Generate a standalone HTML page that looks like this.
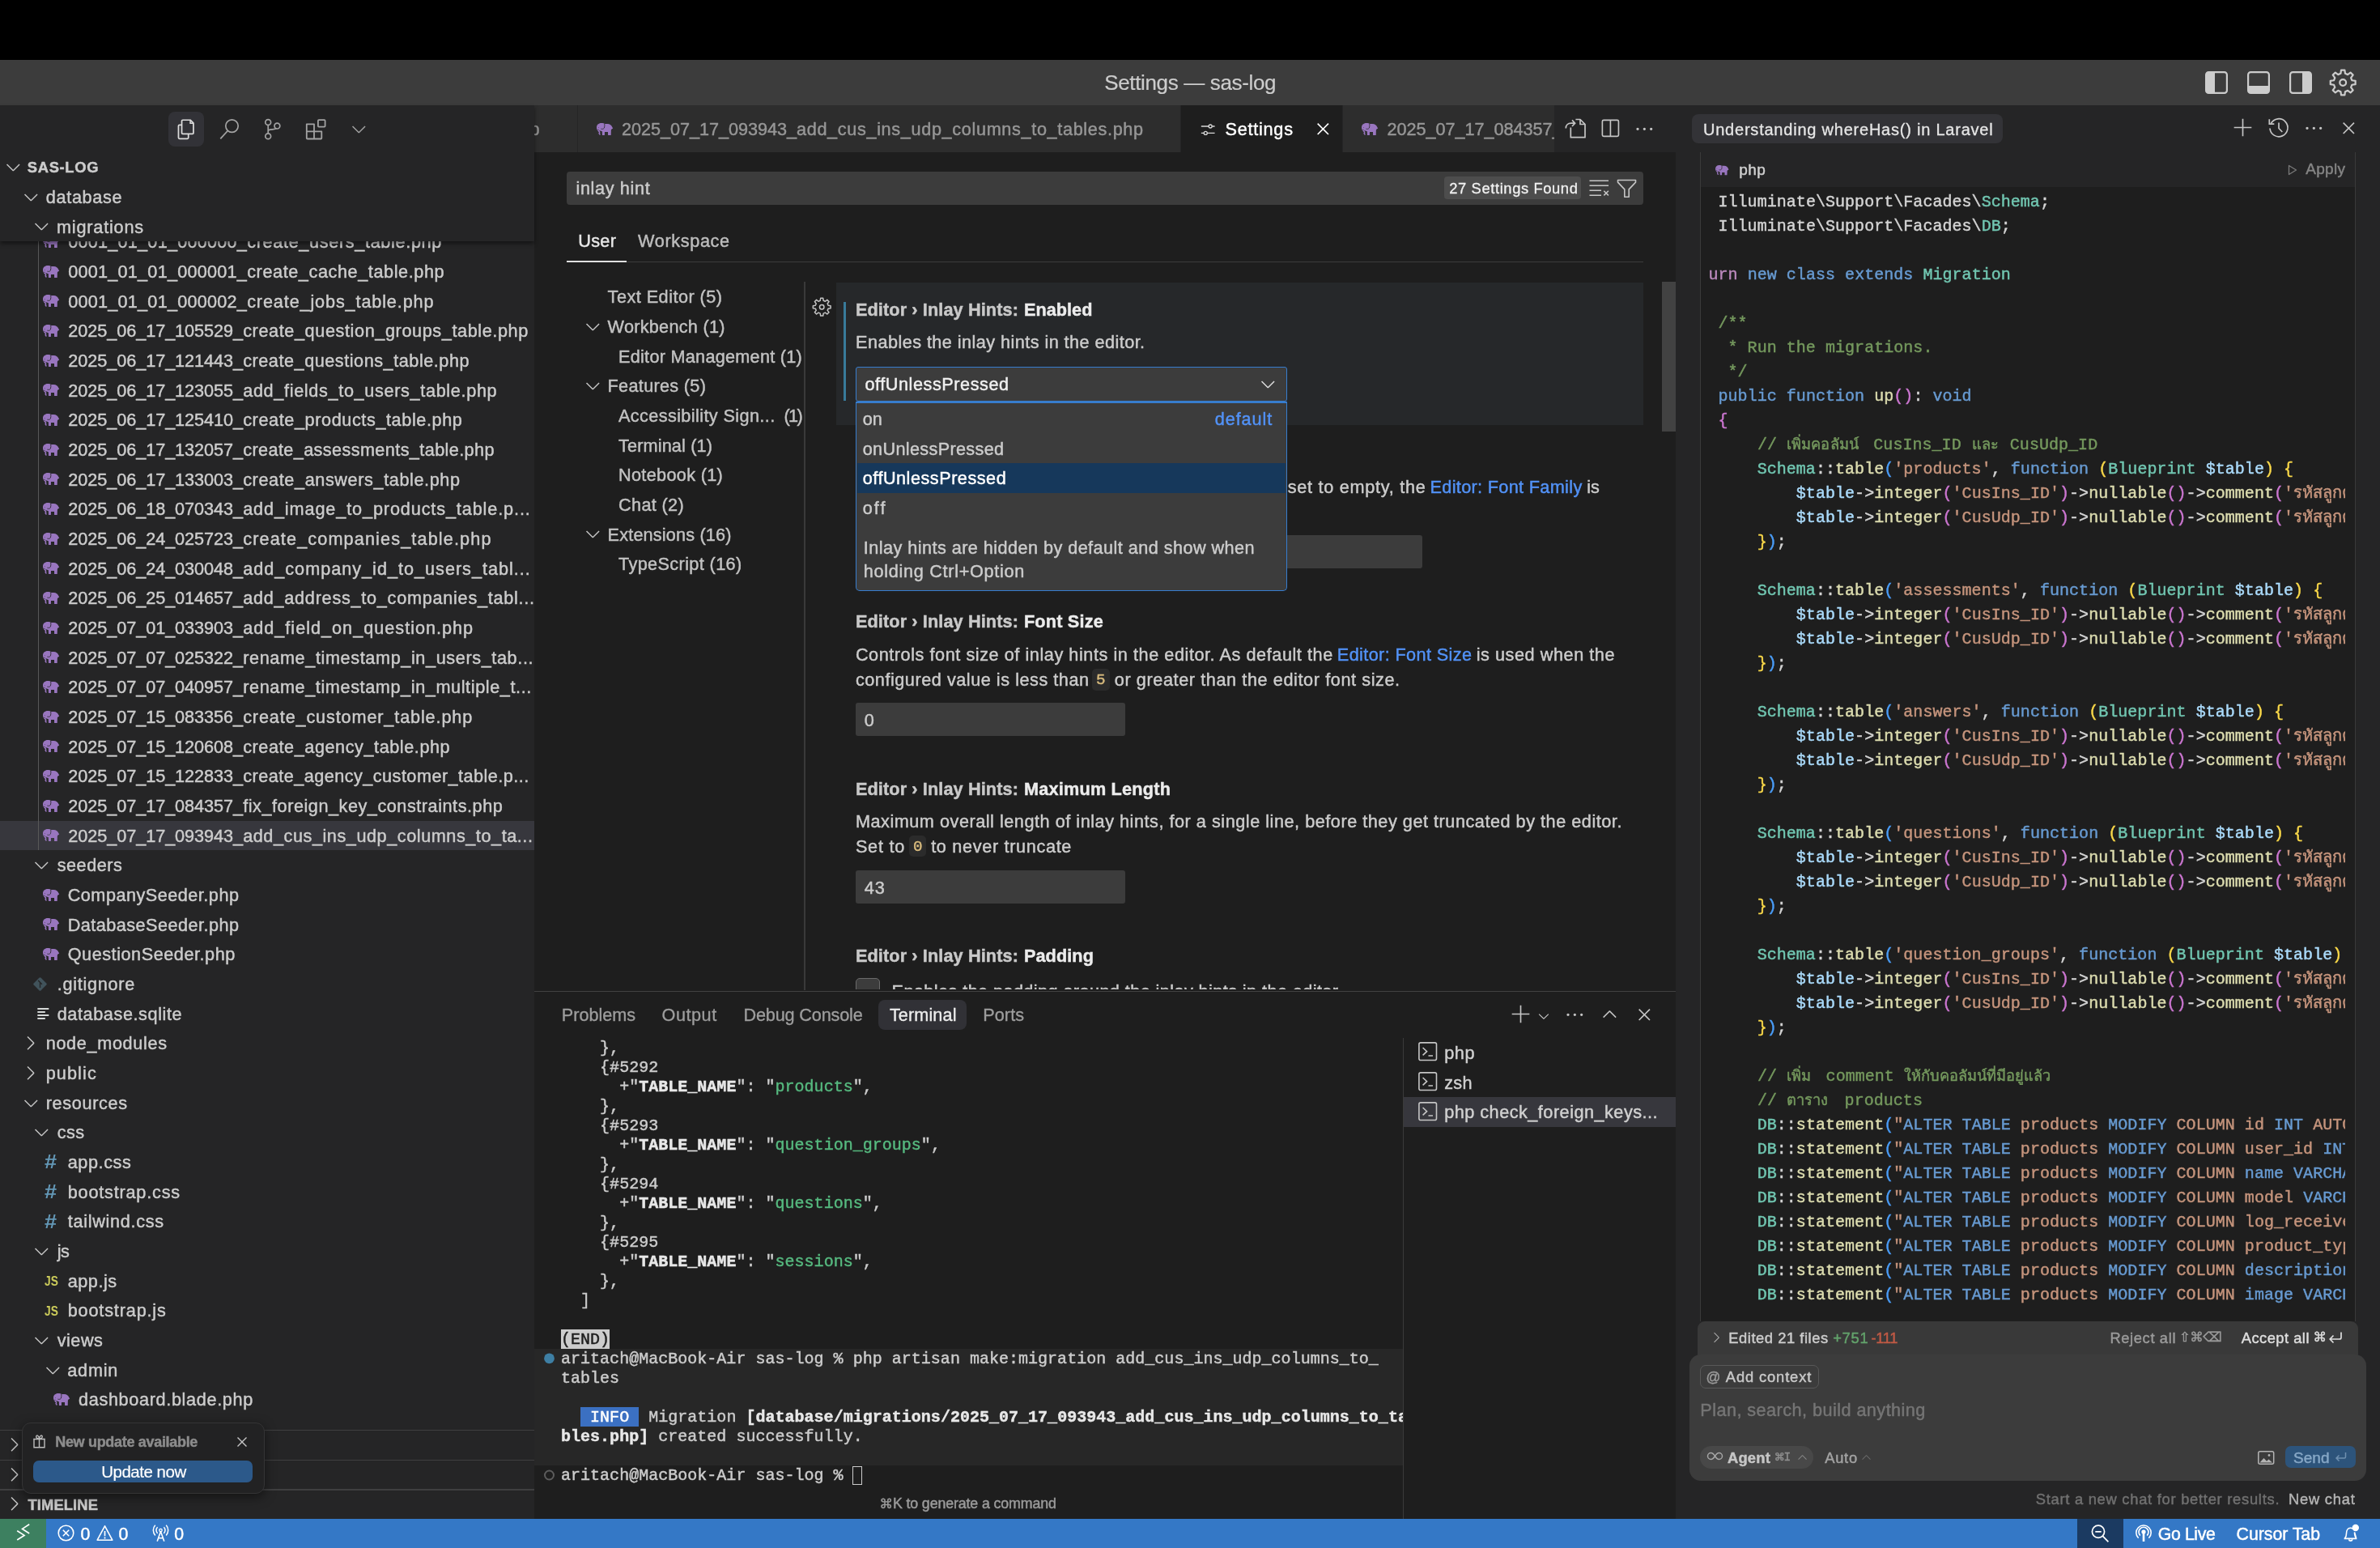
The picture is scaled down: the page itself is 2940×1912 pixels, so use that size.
<!DOCTYPE html><html lang="en"><head><meta charset="utf-8"><title>Settings — sas-log</title><style>
*{box-sizing:border-box;margin:0;padding:0}
html,body{width:2940px;height:1912px;background:#000;overflow:hidden}
body{font-family:"Liberation Sans",sans-serif;color:#ccc;font-size:21.667px;-webkit-font-smoothing:antialiased;-webkit-text-stroke:.45px}
#app{position:relative;width:2940px;height:1912px;overflow:hidden;will-change:transform}
.a{position:absolute}
.t{position:absolute;white-space:pre}
.m{font-family:"Liberation Mono","DejaVu Sans Mono","Noto Sans CJK SC",monospace}
svg{position:absolute;overflow:visible}
b{font-weight:700}
</style></head><body><div id="app"><div class="a" style="left:0.00px;top:74.00px;width:2940.00px;height:56.00px;background:#3c3c3c;"></div><span class="t" style="top:84.47px;line-height:36.67px;font-size:26.000px;left:1364.20px;color:#cccccc;letter-spacing:-0.348px;-webkit-text-stroke:.2px;">Settings — sas-log</span><svg style="left:2724.00px;top:88.00px" width="28.00" height="28.00" viewBox="0 0 28 28" ><rect x="1.100" y="1.100" width="25.800" height="25.800" rx="3.200" fill="none" stroke="#cccccc" stroke-width="2.200"/><path d="M1.500 3.500a2 2 0 0 1 2-2H12v25H3.500a2 2 0 0 1-2-2z" fill="#cccccc"/></svg><svg style="left:2776.00px;top:88.00px" width="28.00" height="28.00" viewBox="0 0 28 28" ><rect x="1.100" y="1.100" width="25.800" height="25.800" rx="3.200" fill="none" stroke="#cccccc" stroke-width="2.200"/><path d="M1.500 18h25v6.500a2 2 0 0 1-2 2h-21a2 2 0 0 1-2-2z" fill="#cccccc"/></svg><svg style="left:2828.00px;top:88.00px" width="28.00" height="28.00" viewBox="0 0 28 28" ><rect x="1.100" y="1.100" width="25.800" height="25.800" rx="3.200" fill="none" stroke="#cccccc" stroke-width="2.200"/><path d="M16 1.500h8.500a2 2 0 0 1 2 2v21a2 2 0 0 1-2 2H16z" fill="#cccccc"/></svg><svg style="left:0;top:0" width="2940" height="1912"><path d="M2892.00 86.56L2896.40 86.56L2896.98 90.80L2900.15 92.11L2903.57 89.52L2906.68 92.63L2904.09 96.05L2905.40 99.22L2909.64 99.80L2909.64 104.20L2905.40 104.78L2904.09 107.95L2906.68 111.37L2903.57 114.48L2900.15 111.89L2896.98 113.20L2896.40 117.44L2892.00 117.44L2891.42 113.20L2888.25 111.89L2884.83 114.48L2881.72 111.37L2884.31 107.95L2883.00 104.78L2878.76 104.20L2878.76 99.80L2883.00 99.22L2884.31 96.05L2881.72 92.63L2884.83 89.52L2888.25 92.11L2891.42 90.80z" fill="none" stroke="#cccccc" stroke-width="2.20" stroke-linejoin="round"/><circle cx="2894.20" cy="102.00" r="3.90" fill="none" stroke="#cccccc" stroke-width="2.20"/></svg><div class="a" style="left:660.00px;top:188.00px;width:1410.00px;height:1036.00px;background:#1e1e1e;"></div><div class="a" style="left:700.00px;top:212.40px;width:1330.00px;height:41.00px;background:#3c3c3c;border-radius:4px;"></div><span class="t" style="top:214.57px;line-height:36.67px;font-size:21.667px;left:711.50px;color:#cccccc;letter-spacing:0.632px;">inlay hint</span><div class="a" style="left:1784.00px;top:218.00px;width:169.00px;height:28.40px;background:#4d4d4d;border-radius:4px;"></div><span class="t" style="top:215.47px;line-height:36.67px;font-size:18.333px;left:1790.30px;color:#f2f2f2;letter-spacing:0.612px;-webkit-text-stroke:.3px #f2f2f2;">27 Settings Found</span><svg style="left:1963.00px;top:221.00px" width="25.00" height="23.00" viewBox="0 0 25 23" ><path d="M.5 2.300h23.500M.5 8.300h23.500M.5 14.300h14.500M.5 20.300h14.500" stroke="#c5c5c5" stroke-width="1.500"/><path d="M18.300 14.800l5.600 5.600M23.900 14.800l-5.600 5.600" stroke="#c5c5c5" stroke-width="1.500"/></svg><svg style="left:1996.50px;top:220.50px" width="25.00" height="25.00" viewBox="0 0 25 25" ><path d="M1.500 1.500h22v2.600l-8.300 8.800v9.300h-5.400v-9.300L1.500 4.100z" fill="none" stroke="#c5c5c5" stroke-width="1.600" stroke-linejoin="round"/></svg><span class="t" style="top:280.07px;line-height:36.67px;font-size:21.667px;left:714.20px;color:#e7e7e7;letter-spacing:0.351px;">User</span><span class="t" style="top:280.07px;line-height:36.67px;font-size:21.667px;left:788.00px;color:#bdbdbd;letter-spacing:0.653px;">Workspace</span><div class="a" style="left:700.00px;top:322.60px;width:1330.00px;height:1.40px;background:#3c3c3c;"></div><div class="a" style="left:700.00px;top:322.00px;width:74.00px;height:1.70px;background:#e0e0e0;"></div><span class="t" style="top:349.17px;line-height:36.67px;font-size:21.667px;left:750.60px;color:#c2c2c2;letter-spacing:0.475px;">Text Editor (5)</span><svg style="left:718.77px;top:389.63px" width="26.67" height="26.67" viewBox="0 0 16 16" ><path d="M7.976 10.072l4.357-4.357.62.618L8.284 11h-.618L3 6.333l.619-.618 4.357 4.357z" fill="#c5c5c5"/></svg><span class="t" style="top:385.83px;line-height:36.67px;font-size:21.667px;left:750.60px;color:#c2c2c2;letter-spacing:0.267px;">Workbench (1)</span><span class="t" style="top:422.50px;line-height:36.67px;font-size:21.667px;left:764.00px;color:#c2c2c2;letter-spacing:0.266px;">Editor Management (1)</span><svg style="left:718.77px;top:462.97px" width="26.67" height="26.67" viewBox="0 0 16 16" ><path d="M7.976 10.072l4.357-4.357.62.618L8.284 11h-.618L3 6.333l.619-.618 4.357 4.357z" fill="#c5c5c5"/></svg><span class="t" style="top:459.17px;line-height:36.67px;font-size:21.667px;left:750.60px;color:#c2c2c2;letter-spacing:0.300px;">Features (5)</span><span class="t" style="top:495.83px;line-height:36.67px;font-size:21.667px;left:764.00px;color:#c2c2c2;letter-spacing:0.393px;">Accessibility Sign...</span><span class="t" style="top:495.83px;line-height:36.67px;font-size:21.667px;left:968.60px;color:#c2c2c2;letter-spacing:-1.715px;">(1)</span><span class="t" style="top:532.50px;line-height:36.67px;font-size:21.667px;left:764.00px;color:#c2c2c2;letter-spacing:0.148px;">Terminal (1)</span><span class="t" style="top:569.17px;line-height:36.67px;font-size:21.667px;left:764.00px;color:#c2c2c2;letter-spacing:0.323px;">Notebook (1)</span><span class="t" style="top:605.83px;line-height:36.67px;font-size:21.667px;left:764.00px;color:#c2c2c2;letter-spacing:0.348px;">Chat (2)</span><svg style="left:718.77px;top:646.30px" width="26.67" height="26.67" viewBox="0 0 16 16" ><path d="M7.976 10.072l4.357-4.357.62.618L8.284 11h-.618L3 6.333l.619-.618 4.357 4.357z" fill="#c5c5c5"/></svg><span class="t" style="top:642.50px;line-height:36.67px;font-size:21.667px;left:750.60px;color:#c2c2c2;letter-spacing:0.169px;">Extensions (16)</span><span class="t" style="top:679.17px;line-height:36.67px;font-size:21.667px;left:764.00px;color:#c2c2c2;letter-spacing:0.385px;">TypeScript (16)</span><div class="a" style="left:993.00px;top:348.00px;width:1.50px;height:875.00px;background:#3a3a3a;"></div><div class="a" style="left:1033.00px;top:348.50px;width:997.00px;height:176.80px;background:#26282a;"></div><svg style="left:0;top:0" width="2940" height="1912"><path d="M1013.65 368.31L1016.75 368.31L1017.16 371.30L1019.40 372.23L1021.80 370.40L1024.00 372.60L1022.17 375.00L1023.10 377.24L1026.09 377.65L1026.09 380.75L1023.10 381.16L1022.17 383.40L1024.00 385.80L1021.80 388.00L1019.40 386.17L1017.16 387.10L1016.75 390.09L1013.65 390.09L1013.24 387.10L1011.00 386.17L1008.60 388.00L1006.40 385.80L1008.23 383.40L1007.30 381.16L1004.31 380.75L1004.31 377.65L1007.30 377.24L1008.23 375.00L1006.40 372.60L1008.60 370.40L1011.00 372.23L1013.24 371.30z" fill="none" stroke="#c5c5c5" stroke-width="1.50" stroke-linejoin="round"/><circle cx="1015.20" cy="379.20" r="2.75" fill="none" stroke="#c5c5c5" stroke-width="1.50"/></svg><div class="a" style="left:1042.00px;top:373.00px;width:3.40px;height:122.40px;background:#387b9a;"></div><span class="t" style="top:365.37px;line-height:36.67px;font-size:21.667px;left:1056.90px;color:#c9c9c9;font-weight:700;letter-spacing:0.124px;">Editor › Inlay Hints:</span><span class="t" style="top:365.37px;line-height:36.67px;font-size:21.667px;left:1264.90px;color:#ececec;font-weight:700;letter-spacing:0.046px;">Enabled</span><span class="t" style="top:405.27px;line-height:36.67px;font-size:21.667px;left:1057.10px;color:#cccccc;letter-spacing:0.441px;">Enables the inlay hints in the editor.</span><span class="t" style="top:584.47px;line-height:36.67px;font-size:21.667px;left:1590.70px;color:#cccccc;letter-spacing:0.721px;">set to empty, the</span><span class="t" style="top:584.47px;line-height:36.67px;font-size:21.667px;left:1766.50px;color:#5292f7;letter-spacing:0.333px;">Editor: Font Family</span><span class="t" style="top:584.47px;line-height:36.67px;font-size:21.667px;left:1960.30px;color:#cccccc;">is</span><div class="a" style="left:1057.00px;top:661.30px;width:699.70px;height:40.70px;background:#3c3c3c;border-radius:3px;"></div><span class="t" style="top:750.07px;line-height:36.67px;font-size:21.667px;left:1056.90px;color:#c9c9c9;font-weight:700;letter-spacing:0.124px;">Editor › Inlay Hints:</span><span class="t" style="top:750.07px;line-height:36.67px;font-size:21.667px;left:1264.90px;color:#ececec;font-weight:700;letter-spacing:0.201px;">Font Size</span><span class="t" style="top:790.67px;line-height:36.67px;font-size:21.667px;left:1056.90px;color:#cccccc;letter-spacing:0.554px;">Controls font size of inlay hints in the editor. As default the</span><span class="t" style="top:790.67px;line-height:36.67px;font-size:21.667px;left:1651.80px;color:#5292f7;letter-spacing:0.384px;">Editor: Font Size</span><span class="t" style="top:790.67px;line-height:36.67px;font-size:21.667px;left:1823.70px;color:#cccccc;letter-spacing:0.553px;">is used when the</span><span class="t" style="top:821.67px;line-height:36.67px;font-size:21.667px;left:1056.90px;color:#cccccc;letter-spacing:0.532px;">configured value is less than</span><div class="a" style="left:1348.80px;top:826.30px;width:21.80px;height:26.30px;background:#2b2b2b;border-radius:5px;"></div><span class="t m" style="top:826.80px;line-height:26.30px;font-size:19.200px;left:1353.95px;color:#d7ba7d;">5</span><span class="t" style="top:821.67px;line-height:36.67px;font-size:21.667px;left:1376.80px;color:#cccccc;letter-spacing:0.591px;">or greater than the editor font size.</span><div class="a" style="left:1056.70px;top:868.00px;width:333.30px;height:40.60px;background:#3c3c3c;border-radius:3px;"></div><span class="t" style="top:872.07px;line-height:36.67px;font-size:21.667px;left:1067.80px;color:#cccccc;">0</span><span class="t" style="top:956.57px;line-height:36.67px;font-size:21.667px;left:1056.90px;color:#c9c9c9;font-weight:700;letter-spacing:0.124px;">Editor › Inlay Hints:</span><span class="t" style="top:956.57px;line-height:36.67px;font-size:21.667px;left:1264.90px;color:#ececec;font-weight:700;letter-spacing:0.226px;">Maximum Length</span><span class="t" style="top:997.27px;line-height:36.67px;font-size:21.667px;left:1056.90px;color:#cccccc;letter-spacing:0.525px;">Maximum overall length of inlay hints, for a single line, before they get truncated by the editor.</span><span class="t" style="top:1027.87px;line-height:36.67px;font-size:21.667px;left:1056.90px;color:#cccccc;letter-spacing:0.758px;">Set to</span><div class="a" style="left:1123.30px;top:1032.20px;width:20.70px;height:26.30px;background:#2b2b2b;border-radius:5px;"></div><span class="t m" style="top:1032.70px;line-height:26.30px;font-size:19.200px;left:1127.90px;color:#d7ba7d;">0</span><span class="t" style="top:1027.87px;line-height:36.67px;font-size:21.667px;left:1150.20px;color:#cccccc;letter-spacing:0.669px;">to never truncate</span><div class="a" style="left:1056.70px;top:1075.00px;width:333.30px;height:40.60px;background:#3c3c3c;border-radius:3px;"></div><span class="t" style="top:1079.07px;line-height:36.67px;font-size:21.667px;left:1067.80px;color:#cccccc;letter-spacing:0.800px;">43</span><span class="t" style="top:1162.87px;line-height:36.67px;font-size:21.667px;left:1056.90px;color:#c9c9c9;font-weight:700;letter-spacing:0.124px;">Editor › Inlay Hints:</span><span class="t" style="top:1162.87px;line-height:36.67px;font-size:21.667px;left:1264.90px;color:#ececec;font-weight:700;letter-spacing:0.098px;">Padding</span><div class="a" style="left:1040px;top:1200px;width:1000px;height:21.500px;overflow:hidden"><div class="a" style="left:16.70px;top:7.60px;width:30.50px;height:30.50px;background:#3c3c3c;border:1.4px solid #6a6a6a;border-radius:5px;"></div><span class="t" style="top:7.07px;line-height:36.67px;font-size:21.667px;left:61.60px;color:#cccccc;letter-spacing:0.416px;">Enables the padding around the inlay hints in the editor.</span></div><div class="a" style="left:2053.00px;top:348.30px;width:17.00px;height:184.50px;background:#424242;"></div><div class="a" style="left:1057.00px;top:453.40px;width:532.60px;height:43.00px;background:#3c3c3c;border:1.700px solid #377dce;border-radius:3px;"></div><span class="t" style="top:457.47px;line-height:36.67px;font-size:21.667px;left:1068.40px;color:#f0f0f0;letter-spacing:0.559px;">offUnlessPressed</span><svg style="left:1553.07px;top:460.67px" width="26.67" height="26.67" viewBox="0 0 16 16" ><path d="M7.976 10.072l4.357-4.357.62.618L8.284 11h-.618L3 6.333l.619-.618 4.357 4.357z" fill="#e0e0e0"/></svg><div class="a" style="left:1057.00px;top:496.20px;width:532.60px;height:234.20px;background:#3c3c3c;border:1.700px solid #377dce;border-top:none;border-radius:0 0 5px 5px;"></div><div class="a" style="left:1057.00px;top:496.00px;width:532.60px;height:1.70px;background:#377dce;"></div><span class="t" style="top:500.47px;line-height:36.67px;font-size:21.667px;left:1065.70px;color:#cccccc;letter-spacing:0.100px;">on</span><span class="t" style="top:500.47px;line-height:36.67px;font-size:21.667px;left:1500.80px;color:#5292f7;letter-spacing:0.899px;">default</span><span class="t" style="top:537.17px;line-height:36.67px;font-size:21.667px;left:1065.70px;color:#cccccc;letter-spacing:0.335px;">onUnlessPressed</span><div class="a" style="left:1058.70px;top:572.00px;width:529.20px;height:36.50px;background:#16385b;"></div><span class="t" style="top:573.47px;line-height:36.67px;font-size:21.667px;left:1065.70px;color:#ffffff;letter-spacing:0.513px;">offUnlessPressed</span><span class="t" style="top:610.27px;line-height:36.67px;font-size:21.667px;left:1065.70px;color:#cccccc;letter-spacing:2.076px;">off</span><span class="t" style="top:658.87px;line-height:36.67px;font-size:21.667px;left:1066.80px;color:#cccccc;letter-spacing:0.445px;">Inlay hints are hidden by default and show when</span><span class="t" style="top:688.47px;line-height:36.67px;font-size:21.667px;left:1066.80px;color:#cccccc;letter-spacing:0.695px;">holding Ctrl+Option</span><div class="a" style="left:660.00px;top:130.00px;width:1410.00px;height:58.00px;background:#252526;"></div><div class="a" style="left:660.00px;top:130.00px;width:52.50px;height:58.00px;background:#2d2d2d;"></div><span class="t" style="top:142.37px;line-height:36.67px;font-size:21.667px;left:654.50px;color:#8f8f8f;">p</span><div class="a" style="left:714.00px;top:130.00px;width:744.00px;height:58.00px;background:#2d2d2d;"></div><svg style="left:736.70px;top:152.05px" width="20.20" height="14.90" viewBox="0 0 20.2 14.9" ><path d="M5.8 0C2.4 0 0 2.4 0 5.4c0 1.600.5 2.800 1.300 3.600l3.300.4 2.200.8.200 4.700h2.900l.1-3.900h4l.1 3.900h3.600l.2-6.300.7-1 1.600-1-.9-1.600C18.600 2.600 16.400 1 13.400.9h-3C9.400.3 7.800 0 5.800 0z" fill="#9976bf"/><path d="M1.700 8.700l1.700 2.100c.5.700.3 1.400-.3 1.900l.9 1.300" fill="none" stroke="#9976bf" stroke-width="1.500" stroke-linecap="round" stroke-linejoin="round"/><path d="M9.700.3c.3 2 .3 4.200-.3 5.800-.8 1.200-2.500 1.600-4 1" fill="none" stroke="#2d2d2d" stroke-width="0.85"/><circle cx="2.300" cy="5.500" r=".5" fill="#2d2d2d" opacity=".55"/><path d="M1.300 8.500l1.300-.3" stroke="#2d2d2d" stroke-width=".7" fill="none"/></svg><span class="t" style="top:142.37px;line-height:36.67px;font-size:21.667px;left:768.00px;color:#969696;letter-spacing:-0.050px;">2025_07_17_093943_</span><span class="t" style="top:142.37px;line-height:36.67px;font-size:21.667px;left:984.00px;color:#969696;letter-spacing:0.654px;">add_cus_ins_udp_columns_to_tables.php</span><div class="a" style="left:1458.50px;top:130.00px;width:199.70px;height:58.00px;background:#1e1e1e;"></div><svg style="left:1482.80px;top:150.60px" width="18.40" height="18.40" viewBox="0 0 22 22" ><path d="M1 6h11M17 6h4M1 16h4M10 16h11" stroke="#d8d8d8" stroke-width="1.600" fill="none"/><circle cx="14.500" cy="6" r="2.400" fill="none" stroke="#d8d8d8" stroke-width="1.600"/><circle cx="7.500" cy="16" r="2.400" fill="none" stroke="#d8d8d8" stroke-width="1.600"/></svg><span class="t" style="top:142.37px;line-height:36.67px;font-size:21.667px;left:1513.50px;color:#ffffff;letter-spacing:0.745px;">Settings</span><svg style="left:1621.37px;top:145.67px" width="26.67" height="26.67" viewBox="0 0 16 16" ><path d="M8 8.707l3.646 3.647.708-.707L8.707 8l3.647-3.646-.707-.708L8 7.293 4.354 3.646l-.707.708L7.293 8l-3.646 3.646.707.708L8 8.707z" fill="#ffffff"/></svg><div class="a" style="left:1659.20px;top:130.00px;width:260.80px;height:58.00px;background:#2d2d2d;"></div><svg style="left:1681.70px;top:152.05px" width="20.20" height="14.90" viewBox="0 0 20.2 14.9" ><path d="M5.8 0C2.4 0 0 2.4 0 5.4c0 1.600.5 2.800 1.300 3.600l3.300.4 2.200.8.200 4.700h2.900l.1-3.900h4l.1 3.900h3.600l.2-6.300.7-1 1.600-1-.9-1.600C18.600 2.600 16.400 1 13.400.9h-3C9.400.3 7.800 0 5.800 0z" fill="#9976bf"/><path d="M1.700 8.700l1.700 2.100c.5.700.3 1.400-.3 1.900l.9 1.300" fill="none" stroke="#9976bf" stroke-width="1.500" stroke-linecap="round" stroke-linejoin="round"/><path d="M9.700.3c.3 2 .3 4.200-.3 5.800-.8 1.200-2.500 1.600-4 1" fill="none" stroke="#2d2d2d" stroke-width="0.85"/><circle cx="2.300" cy="5.500" r=".5" fill="#2d2d2d" opacity=".55"/><path d="M1.300 8.500l1.300-.3" stroke="#2d2d2d" stroke-width=".7" fill="none"/></svg><div class="a" style="left:1713px;top:130px;width:207px;height:58px;overflow:hidden"><span class="t" style="top:12.37px;line-height:36.67px;font-size:21.667px;left:0.50px;color:#969696;letter-spacing:-0.050px;">2025_07_17_084357_</span><span class="t" style="top:12.37px;line-height:36.67px;font-size:21.667px;left:216.50px;color:#969696;letter-spacing:0.533px;">fix_foreign_key_constraints.php</span></div><svg style="left:1933.00px;top:146.00px" width="28.00" height="28.00" viewBox="0 0 28 28" ><path d="M7.300 11.500V23.700H25V7.500L19 1.500h-5.600M19 1.500v6h6" fill="none" stroke="#c5c5c5" stroke-width="1.700" stroke-linejoin="round"/><path d="M1.300 12.500c0-4.200 2.400-6.300 6.700-6.300h4M9 2.400l3.600 3.800L9 10" fill="none" stroke="#c5c5c5" stroke-width="1.700"/></svg><svg style="left:1977.90px;top:146.90px" width="22.80" height="22.80" viewBox="0 0 25 25" ><rect x="1.500" y="1.500" width="22" height="22" rx="1.800" fill="none" stroke="#c5c5c5" stroke-width="1.800"/><path d="M12.500 1.500v22" stroke="#c5c5c5" stroke-width="1.800"/></svg><svg style="left:2018.17px;top:145.67px" width="26.67" height="26.67" viewBox="0 0 16 16" ><path d="M4 8a1 1 0 1 1-2 0 1 1 0 0 1 2 0zm5 0a1 1 0 1 1-2 0 1 1 0 0 1 2 0zm5 0a1 1 0 1 1-2 0 1 1 0 0 1 2 0z" fill="#c5c5c5"/></svg><div class="a" style="left:660.00px;top:1224.00px;width:1410.00px;height:652.00px;background:#1e1e1e;"></div><div class="a" style="left:660.00px;top:1223.60px;width:1410.00px;height:1.50px;background:#414141;"></div><span class="t" style="top:1236.47px;line-height:36.67px;font-size:21.667px;left:693.80px;color:#9d9d9d;letter-spacing:-0.016px;-webkit-text-stroke:.35px #9d9d9d;">Problems</span><span class="t" style="top:1236.47px;line-height:36.67px;font-size:21.667px;left:817.50px;color:#9d9d9d;letter-spacing:0.532px;-webkit-text-stroke:.35px #9d9d9d;">Output</span><span class="t" style="top:1236.47px;line-height:36.67px;font-size:21.667px;left:918.40px;color:#9d9d9d;letter-spacing:-0.155px;-webkit-text-stroke:.35px #9d9d9d;">Debug Console</span><div class="a" style="left:1085.20px;top:1235.30px;width:108.60px;height:36.40px;background:#313136;border-radius:8px;"></div><span class="t" style="top:1236.47px;line-height:36.67px;font-size:21.667px;left:1098.90px;color:#ececec;letter-spacing:0.104px;-webkit-text-stroke:.35px #ececec;">Terminal</span><span class="t" style="top:1236.47px;line-height:36.67px;font-size:21.667px;left:1214.20px;color:#9d9d9d;letter-spacing:0.095px;-webkit-text-stroke:.35px #9d9d9d;">Ports</span><svg style="left:1865.67px;top:1239.67px" width="26.67" height="26.67" viewBox="0 0 16 16" ><path d="M14 7v1H8v6H7V8H1V7h6V1h1v6h6z" fill="#c5c5c5"/></svg><svg style="left:1896.70px;top:1244.50px" width="20.00" height="20.00" viewBox="0 0 16 16" ><path d="M7.976 10.072l4.357-4.357.62.618L8.284 11h-.618L3 6.333l.619-.618 4.357 4.357z" fill="#c5c5c5"/></svg><svg style="left:1931.57px;top:1240.17px" width="26.67" height="26.67" viewBox="0 0 16 16" ><path d="M4 8a1 1 0 1 1-2 0 1 1 0 0 1 2 0zm5 0a1 1 0 1 1-2 0 1 1 0 0 1 2 0zm5 0a1 1 0 1 1-2 0 1 1 0 0 1 2 0z" fill="#c5c5c5"/></svg><svg style="left:1974.67px;top:1239.67px" width="26.67" height="26.67" viewBox="0 0 16 16" ><path d="M8.024 5.928l-4.357 4.357-.62-.618L7.716 5h.618L13 9.667l-.619.618-4.357-4.357z" fill="#c5c5c5"/></svg><svg style="left:2018.07px;top:1239.67px" width="26.67" height="26.67" viewBox="0 0 16 16" ><path d="M8 8.707l3.646 3.647.708-.707L8.707 8l3.647-3.646-.707-.708L8 7.293 4.354 3.646l-.707.708L7.293 8l-3.646 3.646.707.708L8 8.707z" fill="#c5c5c5"/></svg><div class="a" style="left:660px;top:1280px;width:1073px;height:596px;overflow:hidden"><div class="a" style="left:-660px;top:-1280px;width:2940px;height:1912px"><div class="a" style="left:660.00px;top:1665.50px;width:1073.00px;height:144.30px;background:#272727;"></div><span class="t m" style="left:693.0px;top:1283.3px;line-height:24.0px;font-size:20px;letter-spacing:.02px;color:#cccccc">    },</span><span class="t m" style="left:693.0px;top:1307.3px;line-height:24.0px;font-size:20px;letter-spacing:.02px;color:#cccccc">    {#5292</span><span class="t m" style="left:693.0px;top:1331.3px;line-height:24.0px;font-size:20px;letter-spacing:.02px;color:#cccccc">      +"<b style="color:#e8e8e8">TABLE_NAME</b>": "<span style="color:#56b97f">products</span>",</span><span class="t m" style="left:693.0px;top:1355.3px;line-height:24.0px;font-size:20px;letter-spacing:.02px;color:#cccccc">    },</span><span class="t m" style="left:693.0px;top:1379.3px;line-height:24.0px;font-size:20px;letter-spacing:.02px;color:#cccccc">    {#5293</span><span class="t m" style="left:693.0px;top:1403.3px;line-height:24.0px;font-size:20px;letter-spacing:.02px;color:#cccccc">      +"<b style="color:#e8e8e8">TABLE_NAME</b>": "<span style="color:#56b97f">question_groups</span>",</span><span class="t m" style="left:693.0px;top:1427.3px;line-height:24.0px;font-size:20px;letter-spacing:.02px;color:#cccccc">    },</span><span class="t m" style="left:693.0px;top:1451.3px;line-height:24.0px;font-size:20px;letter-spacing:.02px;color:#cccccc">    {#5294</span><span class="t m" style="left:693.0px;top:1475.3px;line-height:24.0px;font-size:20px;letter-spacing:.02px;color:#cccccc">      +"<b style="color:#e8e8e8">TABLE_NAME</b>": "<span style="color:#56b97f">questions</span>",</span><span class="t m" style="left:693.0px;top:1499.3px;line-height:24.0px;font-size:20px;letter-spacing:.02px;color:#cccccc">    },</span><span class="t m" style="left:693.0px;top:1523.3px;line-height:24.0px;font-size:20px;letter-spacing:.02px;color:#cccccc">    {#5295</span><span class="t m" style="left:693.0px;top:1547.3px;line-height:24.0px;font-size:20px;letter-spacing:.02px;color:#cccccc">      +"<b style="color:#e8e8e8">TABLE_NAME</b>": "<span style="color:#56b97f">sessions</span>",</span><span class="t m" style="left:693.0px;top:1571.3px;line-height:24.0px;font-size:20px;letter-spacing:.02px;color:#cccccc">    },</span><span class="t m" style="left:693.0px;top:1595.3px;line-height:24.0px;font-size:20px;letter-spacing:.02px;color:#cccccc">  ]</span><span class="t m" style="left:693.0px;top:1643.3px;line-height:24.0px;font-size:20px;letter-spacing:.02px;color:#cccccc"><span style="background:#cccccc;color:#1e1e1e;padding-top:1px">(END)</span></span><span class="t m" style="left:693.0px;top:1667.3px;line-height:24.0px;font-size:20px;letter-spacing:.02px;color:#cccccc">aritach@MacBook-Air sas-log % php artisan make:migration add_cus_ins_udp_columns_to_</span><span class="t m" style="left:693.0px;top:1691.3px;line-height:24.0px;font-size:20px;letter-spacing:.02px;color:#cccccc">tables</span><span class="t m" style="left:693.0px;top:1739.3px;line-height:24.0px;font-size:20px;letter-spacing:.02px;color:#cccccc">  <span style="background:#3b70c2;color:#fff;padding-top:1px"> INFO </span> Migration <b style="color:#e8e8e8">[database/migrations/2025_07_17_093943_add_cus_ins_udp_columns_to_ta</b></span><span class="t m" style="left:693.0px;top:1763.3px;line-height:24.0px;font-size:20px;letter-spacing:.02px;color:#cccccc"><b style="color:#e8e8e8">bles.php]</b> created successfully.</span><span class="t m" style="left:693.0px;top:1811.3px;line-height:24.0px;font-size:20px;letter-spacing:.02px;color:#cccccc">aritach@MacBook-Air sas-log % </span><div class="a" style="left:1053.20px;top:1811.00px;width:12.30px;height:22.60px;border:1.500px solid #cccccc;"></div><svg style="left:0;top:0" width="2940" height="1912"><circle cx="678.500" cy="1677.800" r="6.400" fill="#3e7fa4"/><circle cx="678.500" cy="1822" r="5.500" fill="none" stroke="#5c5c5c" stroke-width="2"/></svg><span class="t" style="left:1086.500px;top:1845px;line-height:24px;font-size:17.800px;color:#9b9b9b;letter-spacing:-.12px"><span style="font-family:'DejaVu Sans',sans-serif;font-size:16.500px">⌘</span>K to generate a command</span></div></div><div class="a" style="left:1733.00px;top:1282.00px;width:1.40px;height:594.00px;background:#3a3a3a;"></div><div class="a" style="left:1734.20px;top:1355.00px;width:335.80px;height:36.70px;background:#37373d;"></div><svg style="left:1752.30px;top:1287.40px" width="23.40" height="23.40" viewBox="0 0 23.400 23.400" ><rect x=".9" y=".9" width="21.600" height="21.600" rx="2" fill="none" stroke="#c5c5c5" stroke-width="1.600"/><path d="M5.600 7l5 4.700-5 4.700M12.500 17h5.500" fill="none" stroke="#c5c5c5" stroke-width="1.600"/></svg><span class="t" style="top:1283.07px;line-height:36.67px;font-size:21.667px;left:1784.20px;color:#d0d0d0;letter-spacing:0.600px;">php</span><svg style="left:1752.30px;top:1324.07px" width="23.40" height="23.40" viewBox="0 0 23.400 23.400" ><rect x=".9" y=".9" width="21.600" height="21.600" rx="2" fill="none" stroke="#c5c5c5" stroke-width="1.600"/><path d="M5.600 7l5 4.700-5 4.700M12.500 17h5.500" fill="none" stroke="#c5c5c5" stroke-width="1.600"/></svg><span class="t" style="top:1319.73px;line-height:36.67px;font-size:21.667px;left:1784.20px;color:#d0d0d0;letter-spacing:0.267px;">zsh</span><svg style="left:1752.30px;top:1360.73px" width="23.40" height="23.40" viewBox="0 0 23.400 23.400" ><rect x=".9" y=".9" width="21.600" height="21.600" rx="2" fill="none" stroke="#c5c5c5" stroke-width="1.600"/><path d="M5.600 7l5 4.700-5 4.700M12.500 17h5.500" fill="none" stroke="#c5c5c5" stroke-width="1.600"/></svg><span class="t" style="top:1356.40px;line-height:36.67px;font-size:21.667px;left:1784.20px;color:#d0d0d0;letter-spacing:0.491px;">php check_foreign_keys...</span><div class="a" style="left:2070.00px;top:130.00px;width:870.00px;height:1746.00px;background:#252526;"></div><div class="a" style="left:2090.00px;top:141.40px;width:384.00px;height:35.80px;background:#333337;border-radius:8px;"></div><span class="t" style="top:142.07px;line-height:36.67px;font-size:20.000px;left:2104.00px;color:#e6e6e6;letter-spacing:0.777px;-webkit-text-stroke:.3px #e6e6e6;">Understanding whereHas() in Laravel</span><svg style="left:2757.67px;top:144.67px" width="26.67" height="26.67" viewBox="0 0 16 16" ><path d="M14 7v1H8v6H7V8H1V7h6V1h1v6h6z" fill="#c5c5c5"/></svg><svg style="left:2801.00px;top:144.00px" width="28.00" height="28.00" viewBox="0 0 28 28" ><path d="M4.300 8.500A11 11 0 1 1 3 14.500" fill="none" stroke="#c5c5c5" stroke-width="1.700"/><path d="M2.300 3.200v6h6M14 7.500v7l4.300 4.500" fill="none" stroke="#c5c5c5" stroke-width="1.700"/></svg><svg style="left:2844.97px;top:145.17px" width="26.67" height="26.67" viewBox="0 0 16 16" ><path d="M4 8a1 1 0 1 1-2 0 1 1 0 0 1 2 0zm5 0a1 1 0 1 1-2 0 1 1 0 0 1 2 0zm5 0a1 1 0 1 1-2 0 1 1 0 0 1 2 0z" fill="#c5c5c5"/></svg><svg style="left:2888.07px;top:144.67px" width="26.67" height="26.67" viewBox="0 0 16 16" ><path d="M8 8.707l3.646 3.647.708-.707L8.707 8l3.647-3.646-.707-.708L8 7.293 4.354 3.646l-.707.708L7.293 8l-3.646 3.646.707.708L8 8.707z" fill="#c5c5c5"/></svg><div class="a" style="left:2100.00px;top:188.00px;width:810.30px;height:1444.00px;background:#1e1e1e;border-left:1.300px solid #3a3a3a;border-right:1.300px solid #3a3a3a;"></div><div class="a" style="left:2101.30px;top:188.00px;width:807.70px;height:43.30px;background:#252526;"></div><svg style="left:2119.15px;top:203.91px" width="16.50" height="12.17" viewBox="0 0 20.2 14.9" ><path d="M5.8 0C2.4 0 0 2.4 0 5.4c0 1.600.5 2.800 1.300 3.600l3.300.4 2.200.8.200 4.700h2.900l.1-3.900h4l.1 3.900h3.600l.2-6.300.7-1 1.600-1-.9-1.600C18.600 2.600 16.400 1 13.400.9h-3C9.400.3 7.800 0 5.800 0z" fill="#9976bf"/><path d="M1.700 8.700l1.700 2.100c.5.700.3 1.400-.3 1.900l.9 1.300" fill="none" stroke="#9976bf" stroke-width="1.500" stroke-linecap="round" stroke-linejoin="round"/><path d="M9.700.3c.3 2 .3 4.200-.3 5.800-.8 1.200-2.500 1.600-4 1" fill="none" stroke="#252526" stroke-width="0.85"/><circle cx="2.300" cy="5.500" r=".5" fill="#252526" opacity=".55"/><path d="M1.300 8.500l1.300-.3" stroke="#252526" stroke-width=".7" fill="none"/></svg><span class="t" style="top:191.67px;line-height:36.67px;font-size:19.000px;left:2148.20px;color:#d0d0d0;letter-spacing:0.475px;">php</span><svg style="left:2826.00px;top:203.00px" width="12.00" height="14.00" viewBox="0 0 12 14" ><path d="M1.500 1.500l9 5.500-9 5.500z" fill="none" stroke="#7a7a7a" stroke-width="1.300" stroke-linejoin="round"/></svg><span class="t" style="top:191.17px;line-height:36.67px;font-size:19.000px;left:2848.20px;color:#858585;letter-spacing:0.330px;">Apply</span><div class="a" style="left:2110px;top:231.300px;width:787.400px;height:1400px;overflow:hidden"><span class="t m" style="left:-35.7px;top:4.1px;line-height:30px;font-size:20px;letter-spacing:.041px"><span style="color:#679ad1">use</span><span style="color:#d4d4d4"> Illuminate\Support\Facades\</span><span style="color:#71c6b1">Schema</span><span style="color:#d4d4d4">;</span></span><span class="t m" style="left:-35.7px;top:34.1px;line-height:30px;font-size:20px;letter-spacing:.041px"><span style="color:#679ad1">use</span><span style="color:#d4d4d4"> Illuminate\Support\Facades\</span><span style="color:#71c6b1">DB</span><span style="color:#d4d4d4">;</span></span><span class="t m" style="left:-35.7px;top:94.1px;line-height:30px;font-size:20px;letter-spacing:.041px"><span style="color:#bc89bd">ret</span><span style="color:#bc89bd">urn</span><span style="color:#d4d4d4"> </span><span style="color:#679ad1">new</span><span style="color:#d4d4d4"> </span><span style="color:#679ad1">class</span><span style="color:#d4d4d4"> </span><span style="color:#679ad1">extends</span><span style="color:#d4d4d4"> </span><span style="color:#71c6b1">Migration</span></span><span class="t m" style="left:-35.7px;top:154.1px;line-height:30px;font-size:20px;letter-spacing:.041px"><span style="color:#74985d">    /**</span></span><span class="t m" style="left:-35.7px;top:184.1px;line-height:30px;font-size:20px;letter-spacing:.041px"><span style="color:#74985d">     * Run the migrations.</span></span><span class="t m" style="left:-35.7px;top:214.1px;line-height:30px;font-size:20px;letter-spacing:.041px"><span style="color:#74985d">     */</span></span><span class="t m" style="left:-35.7px;top:244.1px;line-height:30px;font-size:20px;letter-spacing:.041px"><span style="color:#d4d4d4">    </span><span style="color:#679ad1">public</span><span style="color:#d4d4d4"> </span><span style="color:#679ad1">function</span><span style="color:#d4d4d4"> </span><span style="color:#dcdcaf">up</span><span style="color:#cc76d1">()</span><span style="color:#d4d4d4">: </span><span style="color:#679ad1">void</span></span><span class="t m" style="left:-35.7px;top:274.1px;line-height:30px;font-size:20px;letter-spacing:.041px"><span style="color:#d4d4d4">    </span><span style="color:#cc76d1">{</span></span><span class="t m" style="left:-35.7px;top:334.1px;line-height:30px;font-size:20px;letter-spacing:.041px"><span style="color:#d4d4d4">        </span><span style="color:#71c6b1">Schema</span><span style="color:#d4d4d4">::</span><span style="color:#dcdcaf">table</span><span style="color:#4a9df8">(</span><span style="color:#c5947c">'products'</span><span style="color:#d4d4d4">, </span><span style="color:#679ad1">function</span><span style="color:#d4d4d4"> </span><span style="color:#f9d849">(</span><span style="color:#71c6b1">Blueprint</span><span style="color:#d4d4d4"> </span><span style="color:#aadafa">$table</span><span style="color:#f9d849">)</span><span style="color:#d4d4d4"> </span><span style="color:#f9d849">{</span></span><span class="t m" style="left:-35.7px;top:364.1px;line-height:30px;font-size:20px;letter-spacing:.041px"><span style="color:#d4d4d4">            </span><span style="color:#aadafa">$table</span><span style="color:#d4d4d4">-&gt;</span><span style="color:#dcdcaf">integer</span><span style="color:#cc76d1">(</span><span style="color:#c5947c">'CusIns_ID'</span><span style="color:#cc76d1">)</span><span style="color:#d4d4d4">-&gt;</span><span style="color:#dcdcaf">nullable</span><span style="color:#cc76d1">()</span><span style="color:#d4d4d4">-&gt;</span><span style="color:#dcdcaf">comment</span><span style="color:#cc76d1">(</span><span style="color:#c5947c">'รหัสลูกค้าประกัน'</span><span style="color:#cc76d1">)</span><span style="color:#d4d4d4">;</span></span><span class="t m" style="left:-35.7px;top:394.1px;line-height:30px;font-size:20px;letter-spacing:.041px"><span style="color:#d4d4d4">            </span><span style="color:#aadafa">$table</span><span style="color:#d4d4d4">-&gt;</span><span style="color:#dcdcaf">integer</span><span style="color:#cc76d1">(</span><span style="color:#c5947c">'CusUdp_ID'</span><span style="color:#cc76d1">)</span><span style="color:#d4d4d4">-&gt;</span><span style="color:#dcdcaf">nullable</span><span style="color:#cc76d1">()</span><span style="color:#d4d4d4">-&gt;</span><span style="color:#dcdcaf">comment</span><span style="color:#cc76d1">(</span><span style="color:#c5947c">'รหัสลูกค้า UDP'</span><span style="color:#cc76d1">)</span><span style="color:#d4d4d4">;</span></span><span class="t m" style="left:-35.7px;top:424.1px;line-height:30px;font-size:20px;letter-spacing:.041px"><span style="color:#d4d4d4">        </span><span style="color:#f9d849">}</span><span style="color:#4a9df8">)</span><span style="color:#d4d4d4">;</span></span><span class="t m" style="left:-35.7px;top:484.1px;line-height:30px;font-size:20px;letter-spacing:.041px"><span style="color:#d4d4d4">        </span><span style="color:#71c6b1">Schema</span><span style="color:#d4d4d4">::</span><span style="color:#dcdcaf">table</span><span style="color:#4a9df8">(</span><span style="color:#c5947c">'assessments'</span><span style="color:#d4d4d4">, </span><span style="color:#679ad1">function</span><span style="color:#d4d4d4"> </span><span style="color:#f9d849">(</span><span style="color:#71c6b1">Blueprint</span><span style="color:#d4d4d4"> </span><span style="color:#aadafa">$table</span><span style="color:#f9d849">)</span><span style="color:#d4d4d4"> </span><span style="color:#f9d849">{</span></span><span class="t m" style="left:-35.7px;top:514.1px;line-height:30px;font-size:20px;letter-spacing:.041px"><span style="color:#d4d4d4">            </span><span style="color:#aadafa">$table</span><span style="color:#d4d4d4">-&gt;</span><span style="color:#dcdcaf">integer</span><span style="color:#cc76d1">(</span><span style="color:#c5947c">'CusIns_ID'</span><span style="color:#cc76d1">)</span><span style="color:#d4d4d4">-&gt;</span><span style="color:#dcdcaf">nullable</span><span style="color:#cc76d1">()</span><span style="color:#d4d4d4">-&gt;</span><span style="color:#dcdcaf">comment</span><span style="color:#cc76d1">(</span><span style="color:#c5947c">'รหัสลูกค้าประกัน'</span><span style="color:#cc76d1">)</span><span style="color:#d4d4d4">;</span></span><span class="t m" style="left:-35.7px;top:544.1px;line-height:30px;font-size:20px;letter-spacing:.041px"><span style="color:#d4d4d4">            </span><span style="color:#aadafa">$table</span><span style="color:#d4d4d4">-&gt;</span><span style="color:#dcdcaf">integer</span><span style="color:#cc76d1">(</span><span style="color:#c5947c">'CusUdp_ID'</span><span style="color:#cc76d1">)</span><span style="color:#d4d4d4">-&gt;</span><span style="color:#dcdcaf">nullable</span><span style="color:#cc76d1">()</span><span style="color:#d4d4d4">-&gt;</span><span style="color:#dcdcaf">comment</span><span style="color:#cc76d1">(</span><span style="color:#c5947c">'รหัสลูกค้า UDP'</span><span style="color:#cc76d1">)</span><span style="color:#d4d4d4">;</span></span><span class="t m" style="left:-35.7px;top:574.1px;line-height:30px;font-size:20px;letter-spacing:.041px"><span style="color:#d4d4d4">        </span><span style="color:#f9d849">}</span><span style="color:#4a9df8">)</span><span style="color:#d4d4d4">;</span></span><span class="t m" style="left:-35.7px;top:634.1px;line-height:30px;font-size:20px;letter-spacing:.041px"><span style="color:#d4d4d4">        </span><span style="color:#71c6b1">Schema</span><span style="color:#d4d4d4">::</span><span style="color:#dcdcaf">table</span><span style="color:#4a9df8">(</span><span style="color:#c5947c">'answers'</span><span style="color:#d4d4d4">, </span><span style="color:#679ad1">function</span><span style="color:#d4d4d4"> </span><span style="color:#f9d849">(</span><span style="color:#71c6b1">Blueprint</span><span style="color:#d4d4d4"> </span><span style="color:#aadafa">$table</span><span style="color:#f9d849">)</span><span style="color:#d4d4d4"> </span><span style="color:#f9d849">{</span></span><span class="t m" style="left:-35.7px;top:664.1px;line-height:30px;font-size:20px;letter-spacing:.041px"><span style="color:#d4d4d4">            </span><span style="color:#aadafa">$table</span><span style="color:#d4d4d4">-&gt;</span><span style="color:#dcdcaf">integer</span><span style="color:#cc76d1">(</span><span style="color:#c5947c">'CusIns_ID'</span><span style="color:#cc76d1">)</span><span style="color:#d4d4d4">-&gt;</span><span style="color:#dcdcaf">nullable</span><span style="color:#cc76d1">()</span><span style="color:#d4d4d4">-&gt;</span><span style="color:#dcdcaf">comment</span><span style="color:#cc76d1">(</span><span style="color:#c5947c">'รหัสลูกค้าประกัน'</span><span style="color:#cc76d1">)</span><span style="color:#d4d4d4">;</span></span><span class="t m" style="left:-35.7px;top:694.1px;line-height:30px;font-size:20px;letter-spacing:.041px"><span style="color:#d4d4d4">            </span><span style="color:#aadafa">$table</span><span style="color:#d4d4d4">-&gt;</span><span style="color:#dcdcaf">integer</span><span style="color:#cc76d1">(</span><span style="color:#c5947c">'CusUdp_ID'</span><span style="color:#cc76d1">)</span><span style="color:#d4d4d4">-&gt;</span><span style="color:#dcdcaf">nullable</span><span style="color:#cc76d1">()</span><span style="color:#d4d4d4">-&gt;</span><span style="color:#dcdcaf">comment</span><span style="color:#cc76d1">(</span><span style="color:#c5947c">'รหัสลูกค้า UDP'</span><span style="color:#cc76d1">)</span><span style="color:#d4d4d4">;</span></span><span class="t m" style="left:-35.7px;top:724.1px;line-height:30px;font-size:20px;letter-spacing:.041px"><span style="color:#d4d4d4">        </span><span style="color:#f9d849">}</span><span style="color:#4a9df8">)</span><span style="color:#d4d4d4">;</span></span><span class="t m" style="left:-35.7px;top:784.1px;line-height:30px;font-size:20px;letter-spacing:.041px"><span style="color:#d4d4d4">        </span><span style="color:#71c6b1">Schema</span><span style="color:#d4d4d4">::</span><span style="color:#dcdcaf">table</span><span style="color:#4a9df8">(</span><span style="color:#c5947c">'questions'</span><span style="color:#d4d4d4">, </span><span style="color:#679ad1">function</span><span style="color:#d4d4d4"> </span><span style="color:#f9d849">(</span><span style="color:#71c6b1">Blueprint</span><span style="color:#d4d4d4"> </span><span style="color:#aadafa">$table</span><span style="color:#f9d849">)</span><span style="color:#d4d4d4"> </span><span style="color:#f9d849">{</span></span><span class="t m" style="left:-35.7px;top:814.1px;line-height:30px;font-size:20px;letter-spacing:.041px"><span style="color:#d4d4d4">            </span><span style="color:#aadafa">$table</span><span style="color:#d4d4d4">-&gt;</span><span style="color:#dcdcaf">integer</span><span style="color:#cc76d1">(</span><span style="color:#c5947c">'CusIns_ID'</span><span style="color:#cc76d1">)</span><span style="color:#d4d4d4">-&gt;</span><span style="color:#dcdcaf">nullable</span><span style="color:#cc76d1">()</span><span style="color:#d4d4d4">-&gt;</span><span style="color:#dcdcaf">comment</span><span style="color:#cc76d1">(</span><span style="color:#c5947c">'รหัสลูกค้าประกัน'</span><span style="color:#cc76d1">)</span><span style="color:#d4d4d4">;</span></span><span class="t m" style="left:-35.7px;top:844.1px;line-height:30px;font-size:20px;letter-spacing:.041px"><span style="color:#d4d4d4">            </span><span style="color:#aadafa">$table</span><span style="color:#d4d4d4">-&gt;</span><span style="color:#dcdcaf">integer</span><span style="color:#cc76d1">(</span><span style="color:#c5947c">'CusUdp_ID'</span><span style="color:#cc76d1">)</span><span style="color:#d4d4d4">-&gt;</span><span style="color:#dcdcaf">nullable</span><span style="color:#cc76d1">()</span><span style="color:#d4d4d4">-&gt;</span><span style="color:#dcdcaf">comment</span><span style="color:#cc76d1">(</span><span style="color:#c5947c">'รหัสลูกค้า UDP'</span><span style="color:#cc76d1">)</span><span style="color:#d4d4d4">;</span></span><span class="t m" style="left:-35.7px;top:874.1px;line-height:30px;font-size:20px;letter-spacing:.041px"><span style="color:#d4d4d4">        </span><span style="color:#f9d849">}</span><span style="color:#4a9df8">)</span><span style="color:#d4d4d4">;</span></span><span class="t m" style="left:-35.7px;top:934.1px;line-height:30px;font-size:20px;letter-spacing:.041px"><span style="color:#d4d4d4">        </span><span style="color:#71c6b1">Schema</span><span style="color:#d4d4d4">::</span><span style="color:#dcdcaf">table</span><span style="color:#4a9df8">(</span><span style="color:#c5947c">'question_groups'</span><span style="color:#d4d4d4">, </span><span style="color:#679ad1">function</span><span style="color:#d4d4d4"> </span><span style="color:#f9d849">(</span><span style="color:#71c6b1">Blueprint</span><span style="color:#d4d4d4"> </span><span style="color:#aadafa">$table</span><span style="color:#f9d849">)</span><span style="color:#d4d4d4"> </span><span style="color:#f9d849">{</span></span><span class="t m" style="left:-35.7px;top:964.1px;line-height:30px;font-size:20px;letter-spacing:.041px"><span style="color:#d4d4d4">            </span><span style="color:#aadafa">$table</span><span style="color:#d4d4d4">-&gt;</span><span style="color:#dcdcaf">integer</span><span style="color:#cc76d1">(</span><span style="color:#c5947c">'CusIns_ID'</span><span style="color:#cc76d1">)</span><span style="color:#d4d4d4">-&gt;</span><span style="color:#dcdcaf">nullable</span><span style="color:#cc76d1">()</span><span style="color:#d4d4d4">-&gt;</span><span style="color:#dcdcaf">comment</span><span style="color:#cc76d1">(</span><span style="color:#c5947c">'รหัสลูกค้าประกัน'</span><span style="color:#cc76d1">)</span><span style="color:#d4d4d4">;</span></span><span class="t m" style="left:-35.7px;top:994.1px;line-height:30px;font-size:20px;letter-spacing:.041px"><span style="color:#d4d4d4">            </span><span style="color:#aadafa">$table</span><span style="color:#d4d4d4">-&gt;</span><span style="color:#dcdcaf">integer</span><span style="color:#cc76d1">(</span><span style="color:#c5947c">'CusUdp_ID'</span><span style="color:#cc76d1">)</span><span style="color:#d4d4d4">-&gt;</span><span style="color:#dcdcaf">nullable</span><span style="color:#cc76d1">()</span><span style="color:#d4d4d4">-&gt;</span><span style="color:#dcdcaf">comment</span><span style="color:#cc76d1">(</span><span style="color:#c5947c">'รหัสลูกค้า UDP'</span><span style="color:#cc76d1">)</span><span style="color:#d4d4d4">;</span></span><span class="t m" style="left:-35.7px;top:1024.1px;line-height:30px;font-size:20px;letter-spacing:.041px"><span style="color:#d4d4d4">        </span><span style="color:#f9d849">}</span><span style="color:#4a9df8">)</span><span style="color:#d4d4d4">;</span></span><span class="t m" style="left:-35.7px;top:1144.1px;line-height:30px;font-size:20px;letter-spacing:.041px"><span style="color:#d4d4d4">        </span><span style="color:#71c6b1">DB</span><span style="color:#d4d4d4">::</span><span style="color:#dcdcaf">statement</span><span style="color:#4a9df8">(</span><span style="color:#c5947c">"</span><span style="color:#679ad1">ALTER TABLE</span><span style="color:#c5947c"> products </span><span style="color:#679ad1">MODIFY</span><span style="color:#c5947c"> COLUMN </span><span style="color:#c5947c">id </span><span style="color:#679ad1">INT</span><span style="color:#c5947c"> AUTO_INCREMENT COMMENT </span></span><span class="t m" style="left:-35.7px;top:1174.1px;line-height:30px;font-size:20px;letter-spacing:.041px"><span style="color:#d4d4d4">        </span><span style="color:#71c6b1">DB</span><span style="color:#d4d4d4">::</span><span style="color:#dcdcaf">statement</span><span style="color:#4a9df8">(</span><span style="color:#c5947c">"</span><span style="color:#679ad1">ALTER TABLE</span><span style="color:#c5947c"> products </span><span style="color:#679ad1">MODIFY</span><span style="color:#c5947c"> COLUMN </span><span style="color:#c5947c">user_id </span><span style="color:#679ad1">INT</span><span style="color:#c5947c"> COMMENT </span></span><span class="t m" style="left:-35.7px;top:1204.1px;line-height:30px;font-size:20px;letter-spacing:.041px"><span style="color:#d4d4d4">        </span><span style="color:#71c6b1">DB</span><span style="color:#d4d4d4">::</span><span style="color:#dcdcaf">statement</span><span style="color:#4a9df8">(</span><span style="color:#c5947c">"</span><span style="color:#679ad1">ALTER TABLE</span><span style="color:#c5947c"> products </span><span style="color:#679ad1">MODIFY</span><span style="color:#c5947c"> COLUMN </span><span style="color:#679ad1">name VARCHAR</span><span style="color:#c5947c">(255) COMMENT </span></span><span class="t m" style="left:-35.7px;top:1234.1px;line-height:30px;font-size:20px;letter-spacing:.041px"><span style="color:#d4d4d4">        </span><span style="color:#71c6b1">DB</span><span style="color:#d4d4d4">::</span><span style="color:#dcdcaf">statement</span><span style="color:#4a9df8">(</span><span style="color:#c5947c">"</span><span style="color:#679ad1">ALTER TABLE</span><span style="color:#c5947c"> products </span><span style="color:#679ad1">MODIFY</span><span style="color:#c5947c"> COLUMN </span><span style="color:#c5947c">model </span><span style="color:#679ad1">VARCHAR</span><span style="color:#c5947c">(255) </span></span><span class="t m" style="left:-35.7px;top:1264.1px;line-height:30px;font-size:20px;letter-spacing:.041px"><span style="color:#d4d4d4">        </span><span style="color:#71c6b1">DB</span><span style="color:#d4d4d4">::</span><span style="color:#dcdcaf">statement</span><span style="color:#4a9df8">(</span><span style="color:#c5947c">"</span><span style="color:#679ad1">ALTER TABLE</span><span style="color:#c5947c"> products </span><span style="color:#679ad1">MODIFY</span><span style="color:#c5947c"> COLUMN </span><span style="color:#c5947c">log_received_at </span><span style="color:#679ad1">DATETIME</span></span><span class="t m" style="left:-35.7px;top:1294.1px;line-height:30px;font-size:20px;letter-spacing:.041px"><span style="color:#d4d4d4">        </span><span style="color:#71c6b1">DB</span><span style="color:#d4d4d4">::</span><span style="color:#dcdcaf">statement</span><span style="color:#4a9df8">(</span><span style="color:#c5947c">"</span><span style="color:#679ad1">ALTER TABLE</span><span style="color:#c5947c"> products </span><span style="color:#679ad1">MODIFY</span><span style="color:#c5947c"> COLUMN </span><span style="color:#c5947c">product_type </span><span style="color:#679ad1">VARCHAR</span></span><span class="t m" style="left:-35.7px;top:1324.1px;line-height:30px;font-size:20px;letter-spacing:.041px"><span style="color:#d4d4d4">        </span><span style="color:#71c6b1">DB</span><span style="color:#d4d4d4">::</span><span style="color:#dcdcaf">statement</span><span style="color:#4a9df8">(</span><span style="color:#c5947c">"</span><span style="color:#679ad1">ALTER TABLE</span><span style="color:#c5947c"> products </span><span style="color:#679ad1">MODIFY</span><span style="color:#c5947c"> COLUMN </span><span style="color:#679ad1">description</span><span style="color:#c5947c"> TEXT </span></span><span class="t m" style="left:-35.7px;top:1354.1px;line-height:30px;font-size:20px;letter-spacing:.041px"><span style="color:#d4d4d4">        </span><span style="color:#71c6b1">DB</span><span style="color:#d4d4d4">::</span><span style="color:#dcdcaf">statement</span><span style="color:#4a9df8">(</span><span style="color:#c5947c">"</span><span style="color:#679ad1">ALTER TABLE</span><span style="color:#c5947c"> products </span><span style="color:#679ad1">MODIFY</span><span style="color:#c5947c"> COLUMN </span><span style="color:#679ad1">image VARCHAR</span><span style="color:#c5947c">(255) </span></span><span class="t m" style="left:61.0px;top:304.1px;line-height:30px;font-size:20px;letter-spacing:.041px;color:#74985d;">//</span><span class="t m" style="left:97.3px;top:304.1px;line-height:30px;font-size:20px;letter-spacing:.041px;color:#74985d;width:97px;overflow:hidden;font-size:18.2px;">เพิ่มคอลัมน์</span><span class="t m" style="left:204.3px;top:304.1px;line-height:30px;font-size:20px;letter-spacing:.041px;color:#74985d;">CusIns_ID</span><span class="t m" style="left:326.0px;top:304.1px;line-height:30px;font-size:20px;letter-spacing:.041px;color:#74985d;width:36px;overflow:hidden;font-size:18.2px;">และ</span><span class="t m" style="left:372.8px;top:304.1px;line-height:30px;font-size:20px;letter-spacing:.041px;color:#74985d;">CusUdp_ID</span><span class="t m" style="left:61.0px;top:1084.1px;line-height:30px;font-size:20px;letter-spacing:.041px;color:#74985d;">//</span><span class="t m" style="left:97.3px;top:1084.1px;line-height:30px;font-size:20px;letter-spacing:.041px;color:#74985d;width:38px;overflow:hidden;font-size:18.2px;">เพิ่ม</span><span class="t m" style="left:145.6px;top:1084.1px;line-height:30px;font-size:20px;letter-spacing:.041px;color:#74985d;">comment</span><span class="t m" style="left:241.8px;top:1084.1px;line-height:30px;font-size:20px;letter-spacing:.041px;color:#74985d;width:190px;overflow:hidden;font-size:18.2px;">ให้กับคอลัมน์ที่มีอยู่แล้ว</span><span class="t m" style="left:61.0px;top:1114.1px;line-height:30px;font-size:20px;letter-spacing:.041px;color:#74985d;">//</span><span class="t m" style="left:97.3px;top:1114.1px;line-height:30px;font-size:20px;letter-spacing:.041px;color:#74985d;width:60px;overflow:hidden;font-size:18.2px;">ตาราง</span><span class="t m" style="left:168.6px;top:1114.1px;line-height:30px;font-size:20px;letter-spacing:.041px;color:#74985d;">products</span></div><div class="a" style="left:2097.00px;top:1632.00px;width:816.00px;height:50.00px;background:#393939;border-radius:9px 9px 0 0;"></div><svg style="left:2109.50px;top:1642.40px" width="20.00" height="20.00" viewBox="0 0 16 16" ><path d="M10.072 8.024L5.715 3.667l.618-.62L11 7.716v.618L6.333 13l-.618-.619 4.357-4.357z" fill="#a8a8a8"/></svg><span class="t" style="top:1635.47px;line-height:36.67px;font-size:18.333px;left:2135.30px;color:#cccccc;letter-spacing:0.552px;">Edited 21 files</span><span class="t" style="top:1635.47px;line-height:36.67px;font-size:18.333px;left:2264.20px;color:#63a26b;letter-spacing:0.702px;">+751</span><span class="t" style="top:1635.47px;line-height:36.67px;font-size:18.333px;left:2311.50px;color:#c05a45;letter-spacing:-0.324px;">-111</span><span class="t" style="top:1635.07px;line-height:36.67px;font-size:18.333px;left:2606.40px;color:#9a9a9a;letter-spacing:0.633px;">Reject all</span><span class="t" style="left:2692px;top:1634px;line-height:36.700px;font-size:16.500px;color:#9a9a9a;letter-spacing:-.5px;font-family:'DejaVu Sans',sans-serif;">⇧⌘⌫</span><span class="t" style="top:1635.07px;line-height:36.67px;font-size:18.333px;left:2768.70px;color:#dedede;letter-spacing:0.480px;">Accept all</span><span class="t" style="left:2857.500px;top:1634px;line-height:36.700px;font-size:16.500px;color:#dedede;letter-spacing:-.5px;font-family:'DejaVu Sans',sans-serif;">⌘</span><svg style="left:2876.00px;top:1643.00px" width="18.00" height="17.00" viewBox="0 0 18 17" ><path d="M16 2.500v6.500a2 2 0 0 1-2 2H2.500M6.500 6.500l-4.300 4.500 4.300 4.500" fill="none" stroke="#dedede" stroke-width="1.700"/></svg><div class="a" style="left:2087.00px;top:1672.80px;width:836.00px;height:156.40px;background:#3c3c3c;border-radius:14px;"></div><div class="a" style="left:2100.00px;top:1685.90px;width:146.70px;height:28.80px;border:1.300px solid #585858;border-radius:7px;"></div><span class="t" style="top:1686.80px;line-height:28.00px;font-size:17.500px;left:2107.50px;color:#9a9a9a;">@</span><span class="t" style="top:1683.27px;line-height:36.67px;font-size:18.333px;left:2131.80px;color:#c8c8c8;letter-spacing:0.868px;">Add context</span><span class="t" style="top:1724.27px;line-height:36.67px;font-size:21.667px;left:2100.30px;color:#757575;letter-spacing:0.445px;">Plan, search, build anything</span><div class="a" style="left:2100.00px;top:1785.70px;width:140.00px;height:28.80px;background:#484848;border-radius:14.500px;"></div><svg style="left:2108.50px;top:1793.00px" width="19.00" height="11.00" viewBox="0 0 19 11" ><path d="M9.500 5.500C7.800 2.800 6.300 1.500 4.500 1.500a4 4 0 0 0 0 8c1.800 0 3.300-1.300 5-4 1.700-2.700 3.200-4 5-4a4 4 0 0 1 0 8c-1.800 0-3.300-1.300-5-4z" fill="none" stroke="#a6a6a6" stroke-width="1.500"/></svg><span class="t" style="top:1783.07px;line-height:36.67px;font-size:18.333px;left:2134.00px;color:#c6c6c6;font-weight:700;letter-spacing:0.203px;">Agent</span><span class="t" style="left:2191.500px;top:1786px;line-height:28.800px;font-size:13px;color:#8f8f8f;font-family:'DejaVu Sans',sans-serif;">⌘</span><span class="t m" style="top:1786.40px;line-height:28.80px;font-size:14.500px;left:2203.50px;color:#8f8f8f;">I</span><svg style="left:2217.80px;top:1791.50px" width="17.00" height="17.00" viewBox="0 0 16 16" ><path d="M8.024 5.928l-4.357 4.357-.62-.618L7.716 5h.618L13 9.667l-.619.618-4.357-4.357z" fill="#8a8a8a"/></svg><span class="t" style="top:1783.47px;line-height:36.67px;font-size:18.333px;left:2254.20px;color:#a2a2a2;letter-spacing:0.729px;">Auto</span><svg style="left:2296.80px;top:1791.50px" width="17.00" height="17.00" viewBox="0 0 16 16" ><path d="M8.024 5.928l-4.357 4.357-.62-.618L7.716 5h.618L13 9.667l-.619.618-4.357-4.357z" fill="#6c6c6c"/></svg><svg style="left:2789.00px;top:1791.50px" width="20.50" height="17.00" viewBox="0 0 20.500 17" ><rect x=".8" y=".8" width="18.900" height="15.400" rx="2" fill="none" stroke="#b4b4b4" stroke-width="1.500"/><path d="M2.500 14.500l5-5.500 3.500 3.800 2.500-2.300 4.500 4z" fill="#b4b4b4"/><circle cx="14" cy="5.500" r="1.400" fill="#b4b4b4"/></svg><div class="a" style="left:2822.80px;top:1786.00px;width:87.20px;height:27.20px;background:#2d547b;border-radius:7px;"></div><span class="t" style="top:1787.20px;line-height:27.20px;font-size:19.033px;left:2833.00px;color:#86a7c6;letter-spacing:0.016px;">Send</span><svg style="left:2884.00px;top:1793.00px" width="15.00" height="13.00" viewBox="0 0 15 13" ><path d="M13.500 1v5.500a1.500 1.500 0 0 1-1.500 1.500H2M5.500 4.500l-3.500 3.500 3.500 3.500" fill="none" stroke="#6f90b0" stroke-width="1.500"/></svg><span class="t" style="top:1833.67px;line-height:36.67px;font-size:18.333px;left:2514.70px;color:#707070;letter-spacing:0.736px;">Start a new chat for better results.</span><span class="t" style="top:1833.67px;line-height:36.67px;font-size:18.333px;left:2826.90px;color:#b4b4b4;letter-spacing:0.797px;">New chat</span><div class="a" style="left:0.00px;top:130.00px;width:660.00px;height:1746.00px;background:#252526;"></div><div class="a" style="left:0.00px;top:1013.57px;width:660.00px;height:36.67px;background:#37373d;"></div><svg style="left:52.90px;top:291.12px" width="20.20" height="14.90" viewBox="0 0 20.2 14.9" ><path d="M5.8 0C2.4 0 0 2.4 0 5.4c0 1.600.5 2.800 1.300 3.600l3.300.4 2.200.8.200 4.700h2.900l.1-3.900h4l.1 3.900h3.600l.2-6.300.7-1 1.600-1-.9-1.600C18.600 2.600 16.400 1 13.400.9h-3C9.400.3 7.800 0 5.800 0z" fill="#9976bf"/><path d="M1.700 8.700l1.700 2.100c.5.700.3 1.400-.3 1.900l.9 1.300" fill="none" stroke="#9976bf" stroke-width="1.500" stroke-linecap="round" stroke-linejoin="round"/><path d="M9.700.3c.3 2 .3 4.200-.3 5.800-.8 1.200-2.500 1.600-4 1" fill="none" stroke="#252526" stroke-width="0.85"/><circle cx="2.300" cy="5.500" r=".5" fill="#252526" opacity=".55"/><path d="M1.300 8.500l1.300-.3" stroke="#252526" stroke-width=".7" fill="none"/></svg><span class="t" style="top:281.43px;line-height:36.67px;font-size:21.667px;left:84.20px;color:#cccccc;letter-spacing:0.228px;">0001_01_01_000000_</span><span class="t" style="top:281.43px;line-height:36.67px;font-size:21.667px;left:305.20px;color:#cccccc;letter-spacing:0.659px;">create_users_table.php</span><svg style="left:52.90px;top:327.78px" width="20.20" height="14.90" viewBox="0 0 20.2 14.9" ><path d="M5.8 0C2.4 0 0 2.4 0 5.4c0 1.600.5 2.800 1.300 3.600l3.300.4 2.200.8.200 4.700h2.900l.1-3.900h4l.1 3.900h3.600l.2-6.300.7-1 1.600-1-.9-1.600C18.600 2.600 16.400 1 13.400.9h-3C9.400.3 7.800 0 5.800 0z" fill="#9976bf"/><path d="M1.700 8.700l1.700 2.100c.5.700.3 1.400-.3 1.900l.9 1.300" fill="none" stroke="#9976bf" stroke-width="1.500" stroke-linecap="round" stroke-linejoin="round"/><path d="M9.700.3c.3 2 .3 4.200-.3 5.800-.8 1.200-2.500 1.600-4 1" fill="none" stroke="#252526" stroke-width="0.85"/><circle cx="2.300" cy="5.500" r=".5" fill="#252526" opacity=".55"/><path d="M1.300 8.500l1.300-.3" stroke="#252526" stroke-width=".7" fill="none"/></svg><span class="t" style="top:318.10px;line-height:36.67px;font-size:21.667px;left:84.20px;color:#cccccc;letter-spacing:0.228px;">0001_01_01_000001_</span><span class="t" style="top:318.10px;line-height:36.67px;font-size:21.667px;left:305.20px;color:#cccccc;letter-spacing:0.581px;">create_cache_table.php</span><svg style="left:52.90px;top:364.45px" width="20.20" height="14.90" viewBox="0 0 20.2 14.9" ><path d="M5.8 0C2.4 0 0 2.4 0 5.4c0 1.600.5 2.800 1.300 3.600l3.300.4 2.200.8.200 4.700h2.900l.1-3.900h4l.1 3.900h3.600l.2-6.300.7-1 1.600-1-.9-1.600C18.600 2.600 16.400 1 13.400.9h-3C9.400.3 7.800 0 5.800 0z" fill="#9976bf"/><path d="M1.700 8.700l1.700 2.100c.5.700.3 1.400-.3 1.900l.9 1.300" fill="none" stroke="#9976bf" stroke-width="1.500" stroke-linecap="round" stroke-linejoin="round"/><path d="M9.700.3c.3 2 .3 4.200-.3 5.800-.8 1.200-2.500 1.600-4 1" fill="none" stroke="#252526" stroke-width="0.85"/><circle cx="2.300" cy="5.500" r=".5" fill="#252526" opacity=".55"/><path d="M1.300 8.500l1.300-.3" stroke="#252526" stroke-width=".7" fill="none"/></svg><span class="t" style="top:354.77px;line-height:36.67px;font-size:21.667px;left:84.20px;color:#cccccc;letter-spacing:0.228px;">0001_01_01_000002_</span><span class="t" style="top:354.77px;line-height:36.67px;font-size:21.667px;left:305.20px;color:#cccccc;letter-spacing:0.859px;">create_jobs_table.php</span><svg style="left:52.90px;top:401.12px" width="20.20" height="14.90" viewBox="0 0 20.2 14.9" ><path d="M5.8 0C2.4 0 0 2.4 0 5.4c0 1.600.5 2.800 1.300 3.600l3.300.4 2.200.8.200 4.700h2.900l.1-3.900h4l.1 3.900h3.600l.2-6.300.7-1 1.600-1-.9-1.600C18.600 2.600 16.400 1 13.400.9h-3C9.400.3 7.800 0 5.800 0z" fill="#9976bf"/><path d="M1.700 8.700l1.700 2.100c.5.700.3 1.400-.3 1.900l.9 1.300" fill="none" stroke="#9976bf" stroke-width="1.500" stroke-linecap="round" stroke-linejoin="round"/><path d="M9.700.3c.3 2 .3 4.200-.3 5.800-.8 1.200-2.500 1.600-4 1" fill="none" stroke="#252526" stroke-width="0.85"/><circle cx="2.300" cy="5.500" r=".5" fill="#252526" opacity=".55"/><path d="M1.300 8.500l1.300-.3" stroke="#252526" stroke-width=".7" fill="none"/></svg><span class="t" style="top:391.43px;line-height:36.67px;font-size:21.667px;left:84.20px;color:#cccccc;letter-spacing:-0.050px;">2025_06_17_105529_</span><span class="t" style="top:391.43px;line-height:36.67px;font-size:21.667px;left:300.20px;color:#cccccc;letter-spacing:0.600px;">create_question_groups_table.php</span><svg style="left:52.90px;top:437.78px" width="20.20" height="14.90" viewBox="0 0 20.2 14.9" ><path d="M5.8 0C2.4 0 0 2.4 0 5.4c0 1.600.5 2.800 1.300 3.600l3.300.4 2.200.8.200 4.700h2.900l.1-3.900h4l.1 3.900h3.600l.2-6.300.7-1 1.600-1-.9-1.600C18.600 2.600 16.400 1 13.400.9h-3C9.400.3 7.800 0 5.800 0z" fill="#9976bf"/><path d="M1.700 8.700l1.700 2.100c.5.700.3 1.400-.3 1.900l.9 1.300" fill="none" stroke="#9976bf" stroke-width="1.500" stroke-linecap="round" stroke-linejoin="round"/><path d="M9.700.3c.3 2 .3 4.200-.3 5.800-.8 1.200-2.500 1.600-4 1" fill="none" stroke="#252526" stroke-width="0.85"/><circle cx="2.300" cy="5.500" r=".5" fill="#252526" opacity=".55"/><path d="M1.300 8.500l1.300-.3" stroke="#252526" stroke-width=".7" fill="none"/></svg><span class="t" style="top:428.10px;line-height:36.67px;font-size:21.667px;left:84.20px;color:#cccccc;letter-spacing:-0.050px;">2025_06_17_121443_</span><span class="t" style="top:428.10px;line-height:36.67px;font-size:21.667px;left:300.20px;color:#cccccc;letter-spacing:0.531px;">create_questions_table.php</span><svg style="left:52.90px;top:474.45px" width="20.20" height="14.90" viewBox="0 0 20.2 14.9" ><path d="M5.8 0C2.4 0 0 2.4 0 5.4c0 1.600.5 2.800 1.300 3.600l3.300.4 2.200.8.200 4.700h2.900l.1-3.900h4l.1 3.900h3.600l.2-6.300.7-1 1.600-1-.9-1.600C18.600 2.600 16.400 1 13.400.9h-3C9.400.3 7.800 0 5.800 0z" fill="#9976bf"/><path d="M1.700 8.700l1.700 2.100c.5.700.3 1.400-.3 1.900l.9 1.300" fill="none" stroke="#9976bf" stroke-width="1.500" stroke-linecap="round" stroke-linejoin="round"/><path d="M9.700.3c.3 2 .3 4.200-.3 5.800-.8 1.200-2.500 1.600-4 1" fill="none" stroke="#252526" stroke-width="0.85"/><circle cx="2.300" cy="5.500" r=".5" fill="#252526" opacity=".55"/><path d="M1.300 8.500l1.300-.3" stroke="#252526" stroke-width=".7" fill="none"/></svg><span class="t" style="top:464.77px;line-height:36.67px;font-size:21.667px;left:84.20px;color:#cccccc;letter-spacing:-0.050px;">2025_06_17_123055_</span><span class="t" style="top:464.77px;line-height:36.67px;font-size:21.667px;left:300.20px;color:#cccccc;letter-spacing:0.659px;">add_fields_to_users_table.php</span><svg style="left:52.90px;top:511.12px" width="20.20" height="14.90" viewBox="0 0 20.2 14.9" ><path d="M5.8 0C2.4 0 0 2.4 0 5.4c0 1.600.5 2.800 1.300 3.600l3.300.4 2.200.8.200 4.700h2.900l.1-3.900h4l.1 3.900h3.600l.2-6.300.7-1 1.600-1-.9-1.600C18.600 2.600 16.400 1 13.400.9h-3C9.400.3 7.800 0 5.800 0z" fill="#9976bf"/><path d="M1.700 8.700l1.700 2.100c.5.700.3 1.400-.3 1.900l.9 1.300" fill="none" stroke="#9976bf" stroke-width="1.500" stroke-linecap="round" stroke-linejoin="round"/><path d="M9.700.3c.3 2 .3 4.200-.3 5.800-.8 1.200-2.500 1.600-4 1" fill="none" stroke="#252526" stroke-width="0.85"/><circle cx="2.300" cy="5.500" r=".5" fill="#252526" opacity=".55"/><path d="M1.300 8.500l1.300-.3" stroke="#252526" stroke-width=".7" fill="none"/></svg><span class="t" style="top:501.43px;line-height:36.67px;font-size:21.667px;left:84.20px;color:#cccccc;letter-spacing:-0.050px;">2025_06_17_125410_</span><span class="t" style="top:501.43px;line-height:36.67px;font-size:21.667px;left:300.20px;color:#cccccc;letter-spacing:0.593px;">create_products_table.php</span><svg style="left:52.90px;top:547.78px" width="20.20" height="14.90" viewBox="0 0 20.2 14.9" ><path d="M5.8 0C2.4 0 0 2.4 0 5.4c0 1.600.5 2.800 1.300 3.600l3.300.4 2.200.8.200 4.700h2.900l.1-3.900h4l.1 3.900h3.600l.2-6.300.7-1 1.600-1-.9-1.600C18.600 2.600 16.400 1 13.400.9h-3C9.400.3 7.800 0 5.800 0z" fill="#9976bf"/><path d="M1.700 8.700l1.700 2.100c.5.700.3 1.400-.3 1.900l.9 1.300" fill="none" stroke="#9976bf" stroke-width="1.500" stroke-linecap="round" stroke-linejoin="round"/><path d="M9.700.3c.3 2 .3 4.200-.3 5.800-.8 1.200-2.500 1.600-4 1" fill="none" stroke="#252526" stroke-width="0.85"/><circle cx="2.300" cy="5.500" r=".5" fill="#252526" opacity=".55"/><path d="M1.300 8.500l1.300-.3" stroke="#252526" stroke-width=".7" fill="none"/></svg><span class="t" style="top:538.10px;line-height:36.67px;font-size:21.667px;left:84.20px;color:#cccccc;letter-spacing:-0.050px;">2025_06_17_132057_</span><span class="t" style="top:538.10px;line-height:36.67px;font-size:21.667px;left:300.20px;color:#cccccc;letter-spacing:0.392px;">create_assessments_table.php</span><svg style="left:52.90px;top:584.45px" width="20.20" height="14.90" viewBox="0 0 20.2 14.9" ><path d="M5.8 0C2.4 0 0 2.4 0 5.4c0 1.600.5 2.800 1.300 3.600l3.300.4 2.200.8.200 4.700h2.900l.1-3.900h4l.1 3.900h3.600l.2-6.300.7-1 1.600-1-.9-1.600C18.600 2.600 16.400 1 13.400.9h-3C9.400.3 7.800 0 5.800 0z" fill="#9976bf"/><path d="M1.700 8.700l1.700 2.100c.5.700.3 1.400-.3 1.900l.9 1.300" fill="none" stroke="#9976bf" stroke-width="1.500" stroke-linecap="round" stroke-linejoin="round"/><path d="M9.700.3c.3 2 .3 4.200-.3 5.800-.8 1.200-2.500 1.600-4 1" fill="none" stroke="#252526" stroke-width="0.85"/><circle cx="2.300" cy="5.500" r=".5" fill="#252526" opacity=".55"/><path d="M1.300 8.500l1.300-.3" stroke="#252526" stroke-width=".7" fill="none"/></svg><span class="t" style="top:574.77px;line-height:36.67px;font-size:21.667px;left:84.20px;color:#cccccc;letter-spacing:-0.050px;">2025_06_17_133003_</span><span class="t" style="top:574.77px;line-height:36.67px;font-size:21.667px;left:300.20px;color:#cccccc;letter-spacing:0.602px;">create_answers_table.php</span><svg style="left:52.90px;top:621.12px" width="20.20" height="14.90" viewBox="0 0 20.2 14.9" ><path d="M5.8 0C2.4 0 0 2.4 0 5.4c0 1.600.5 2.800 1.300 3.600l3.300.4 2.200.8.200 4.700h2.900l.1-3.900h4l.1 3.900h3.600l.2-6.300.7-1 1.600-1-.9-1.600C18.600 2.600 16.400 1 13.400.9h-3C9.400.3 7.800 0 5.800 0z" fill="#9976bf"/><path d="M1.700 8.700l1.700 2.100c.5.700.3 1.400-.3 1.900l.9 1.300" fill="none" stroke="#9976bf" stroke-width="1.500" stroke-linecap="round" stroke-linejoin="round"/><path d="M9.700.3c.3 2 .3 4.200-.3 5.800-.8 1.200-2.500 1.600-4 1" fill="none" stroke="#252526" stroke-width="0.85"/><circle cx="2.300" cy="5.500" r=".5" fill="#252526" opacity=".55"/><path d="M1.300 8.500l1.300-.3" stroke="#252526" stroke-width=".7" fill="none"/></svg><span class="t" style="top:611.43px;line-height:36.67px;font-size:21.667px;left:84.20px;color:#cccccc;letter-spacing:-0.050px;">2025_06_18_070343_</span><span class="t" style="top:611.43px;line-height:36.67px;font-size:21.667px;left:300.20px;color:#cccccc;letter-spacing:0.876px;">add_image_to_products_table.p...</span><svg style="left:52.90px;top:657.78px" width="20.20" height="14.90" viewBox="0 0 20.2 14.9" ><path d="M5.8 0C2.4 0 0 2.4 0 5.4c0 1.600.5 2.800 1.300 3.600l3.300.4 2.200.8.200 4.700h2.900l.1-3.900h4l.1 3.900h3.600l.2-6.300.7-1 1.600-1-.9-1.600C18.600 2.600 16.400 1 13.400.9h-3C9.400.3 7.800 0 5.800 0z" fill="#9976bf"/><path d="M1.700 8.700l1.700 2.100c.5.700.3 1.400-.3 1.900l.9 1.300" fill="none" stroke="#9976bf" stroke-width="1.500" stroke-linecap="round" stroke-linejoin="round"/><path d="M9.700.3c.3 2 .3 4.200-.3 5.800-.8 1.200-2.500 1.600-4 1" fill="none" stroke="#252526" stroke-width="0.85"/><circle cx="2.300" cy="5.500" r=".5" fill="#252526" opacity=".55"/><path d="M1.300 8.500l1.300-.3" stroke="#252526" stroke-width=".7" fill="none"/></svg><span class="t" style="top:648.10px;line-height:36.67px;font-size:21.667px;left:84.20px;color:#cccccc;letter-spacing:-0.050px;">2025_06_24_025723_</span><span class="t" style="top:648.10px;line-height:36.67px;font-size:21.667px;left:300.20px;color:#cccccc;letter-spacing:1.126px;">create_companies_table.php</span><svg style="left:52.90px;top:694.45px" width="20.20" height="14.90" viewBox="0 0 20.2 14.9" ><path d="M5.8 0C2.4 0 0 2.4 0 5.4c0 1.600.5 2.800 1.300 3.600l3.300.4 2.200.8.200 4.700h2.900l.1-3.900h4l.1 3.900h3.600l.2-6.300.7-1 1.600-1-.9-1.600C18.600 2.600 16.400 1 13.400.9h-3C9.400.3 7.800 0 5.800 0z" fill="#9976bf"/><path d="M1.700 8.700l1.700 2.100c.5.700.3 1.400-.3 1.900l.9 1.300" fill="none" stroke="#9976bf" stroke-width="1.500" stroke-linecap="round" stroke-linejoin="round"/><path d="M9.700.3c.3 2 .3 4.200-.3 5.800-.8 1.200-2.500 1.600-4 1" fill="none" stroke="#252526" stroke-width="0.85"/><circle cx="2.300" cy="5.500" r=".5" fill="#252526" opacity=".55"/><path d="M1.300 8.500l1.300-.3" stroke="#252526" stroke-width=".7" fill="none"/></svg><span class="t" style="top:684.77px;line-height:36.67px;font-size:21.667px;left:84.20px;color:#cccccc;letter-spacing:-0.050px;">2025_06_24_030048_</span><span class="t" style="top:684.77px;line-height:36.67px;font-size:21.667px;left:300.20px;color:#cccccc;letter-spacing:0.986px;">add_company_id_to_users_tabl...</span><svg style="left:52.90px;top:731.12px" width="20.20" height="14.90" viewBox="0 0 20.2 14.9" ><path d="M5.8 0C2.4 0 0 2.4 0 5.4c0 1.600.5 2.800 1.300 3.600l3.300.4 2.200.8.200 4.700h2.900l.1-3.900h4l.1 3.900h3.600l.2-6.300.7-1 1.600-1-.9-1.600C18.600 2.600 16.400 1 13.400.9h-3C9.400.3 7.800 0 5.800 0z" fill="#9976bf"/><path d="M1.700 8.700l1.700 2.100c.5.700.3 1.400-.3 1.900l.9 1.300" fill="none" stroke="#9976bf" stroke-width="1.500" stroke-linecap="round" stroke-linejoin="round"/><path d="M9.700.3c.3 2 .3 4.200-.3 5.800-.8 1.200-2.500 1.600-4 1" fill="none" stroke="#252526" stroke-width="0.85"/><circle cx="2.300" cy="5.500" r=".5" fill="#252526" opacity=".55"/><path d="M1.300 8.500l1.300-.3" stroke="#252526" stroke-width=".7" fill="none"/></svg><span class="t" style="top:721.43px;line-height:36.67px;font-size:21.667px;left:84.20px;color:#cccccc;letter-spacing:-0.050px;">2025_06_25_014657_</span><span class="t" style="top:721.43px;line-height:36.67px;font-size:21.667px;left:300.20px;color:#cccccc;letter-spacing:0.736px;">add_address_to_companies_tabl...</span><svg style="left:52.90px;top:767.78px" width="20.20" height="14.90" viewBox="0 0 20.2 14.9" ><path d="M5.8 0C2.4 0 0 2.4 0 5.4c0 1.600.5 2.800 1.300 3.600l3.300.4 2.200.8.200 4.700h2.900l.1-3.900h4l.1 3.900h3.600l.2-6.300.7-1 1.600-1-.9-1.600C18.600 2.600 16.400 1 13.400.9h-3C9.400.3 7.800 0 5.800 0z" fill="#9976bf"/><path d="M1.700 8.700l1.700 2.100c.5.700.3 1.400-.3 1.900l.9 1.300" fill="none" stroke="#9976bf" stroke-width="1.500" stroke-linecap="round" stroke-linejoin="round"/><path d="M9.700.3c.3 2 .3 4.200-.3 5.800-.8 1.200-2.500 1.600-4 1" fill="none" stroke="#252526" stroke-width="0.85"/><circle cx="2.300" cy="5.500" r=".5" fill="#252526" opacity=".55"/><path d="M1.300 8.500l1.300-.3" stroke="#252526" stroke-width=".7" fill="none"/></svg><span class="t" style="top:758.10px;line-height:36.67px;font-size:21.667px;left:84.20px;color:#cccccc;letter-spacing:-0.050px;">2025_07_01_033903_</span><span class="t" style="top:758.10px;line-height:36.67px;font-size:21.667px;left:300.20px;color:#cccccc;letter-spacing:0.994px;">add_field_on_question.php</span><svg style="left:52.90px;top:804.45px" width="20.20" height="14.90" viewBox="0 0 20.2 14.9" ><path d="M5.8 0C2.4 0 0 2.4 0 5.4c0 1.600.5 2.800 1.300 3.600l3.300.4 2.200.8.200 4.700h2.900l.1-3.900h4l.1 3.900h3.600l.2-6.300.7-1 1.600-1-.9-1.600C18.600 2.600 16.400 1 13.400.9h-3C9.400.3 7.800 0 5.800 0z" fill="#9976bf"/><path d="M1.700 8.700l1.700 2.100c.5.700.3 1.400-.3 1.900l.9 1.300" fill="none" stroke="#9976bf" stroke-width="1.500" stroke-linecap="round" stroke-linejoin="round"/><path d="M9.700.3c.3 2 .3 4.200-.3 5.800-.8 1.200-2.500 1.600-4 1" fill="none" stroke="#252526" stroke-width="0.85"/><circle cx="2.300" cy="5.500" r=".5" fill="#252526" opacity=".55"/><path d="M1.300 8.500l1.300-.3" stroke="#252526" stroke-width=".7" fill="none"/></svg><span class="t" style="top:794.77px;line-height:36.67px;font-size:21.667px;left:84.20px;color:#cccccc;letter-spacing:-0.050px;">2025_07_07_025322_</span><span class="t" style="top:794.77px;line-height:36.67px;font-size:21.667px;left:300.20px;color:#cccccc;letter-spacing:0.609px;">rename_timestamp_in_users_tab...</span><svg style="left:52.90px;top:841.12px" width="20.20" height="14.90" viewBox="0 0 20.2 14.9" ><path d="M5.8 0C2.4 0 0 2.4 0 5.4c0 1.600.5 2.800 1.300 3.600l3.300.4 2.200.8.200 4.700h2.900l.1-3.900h4l.1 3.900h3.600l.2-6.300.7-1 1.600-1-.9-1.600C18.600 2.600 16.400 1 13.400.9h-3C9.400.3 7.800 0 5.800 0z" fill="#9976bf"/><path d="M1.700 8.700l1.700 2.100c.5.700.3 1.400-.3 1.900l.9 1.300" fill="none" stroke="#9976bf" stroke-width="1.500" stroke-linecap="round" stroke-linejoin="round"/><path d="M9.700.3c.3 2 .3 4.200-.3 5.800-.8 1.200-2.500 1.600-4 1" fill="none" stroke="#252526" stroke-width="0.85"/><circle cx="2.300" cy="5.500" r=".5" fill="#252526" opacity=".55"/><path d="M1.300 8.500l1.300-.3" stroke="#252526" stroke-width=".7" fill="none"/></svg><span class="t" style="top:831.43px;line-height:36.67px;font-size:21.667px;left:84.20px;color:#cccccc;letter-spacing:-0.050px;">2025_07_07_040957_</span><span class="t" style="top:831.43px;line-height:36.67px;font-size:21.667px;left:300.20px;color:#cccccc;letter-spacing:0.597px;">rename_timestamp_in_multiple_t...</span><svg style="left:52.90px;top:877.78px" width="20.20" height="14.90" viewBox="0 0 20.2 14.9" ><path d="M5.8 0C2.4 0 0 2.4 0 5.4c0 1.600.5 2.800 1.300 3.600l3.300.4 2.200.8.200 4.700h2.900l.1-3.900h4l.1 3.900h3.600l.2-6.300.7-1 1.600-1-.9-1.600C18.600 2.600 16.400 1 13.400.9h-3C9.400.3 7.800 0 5.800 0z" fill="#9976bf"/><path d="M1.700 8.700l1.700 2.100c.5.700.3 1.400-.3 1.900l.9 1.300" fill="none" stroke="#9976bf" stroke-width="1.500" stroke-linecap="round" stroke-linejoin="round"/><path d="M9.700.3c.3 2 .3 4.200-.3 5.800-.8 1.200-2.500 1.600-4 1" fill="none" stroke="#252526" stroke-width="0.85"/><circle cx="2.300" cy="5.500" r=".5" fill="#252526" opacity=".55"/><path d="M1.300 8.500l1.300-.3" stroke="#252526" stroke-width=".7" fill="none"/></svg><span class="t" style="top:868.10px;line-height:36.67px;font-size:21.667px;left:84.20px;color:#cccccc;letter-spacing:-0.050px;">2025_07_15_083356_</span><span class="t" style="top:868.10px;line-height:36.67px;font-size:21.667px;left:300.20px;color:#cccccc;letter-spacing:0.859px;">create_customer_table.php</span><svg style="left:52.90px;top:914.45px" width="20.20" height="14.90" viewBox="0 0 20.2 14.9" ><path d="M5.8 0C2.4 0 0 2.4 0 5.4c0 1.600.5 2.800 1.300 3.600l3.300.4 2.200.8.200 4.700h2.900l.1-3.900h4l.1 3.900h3.600l.2-6.300.7-1 1.600-1-.9-1.600C18.600 2.600 16.400 1 13.400.9h-3C9.400.3 7.800 0 5.800 0z" fill="#9976bf"/><path d="M1.700 8.700l1.700 2.100c.5.700.3 1.400-.3 1.900l.9 1.300" fill="none" stroke="#9976bf" stroke-width="1.500" stroke-linecap="round" stroke-linejoin="round"/><path d="M9.700.3c.3 2 .3 4.200-.3 5.800-.8 1.200-2.500 1.600-4 1" fill="none" stroke="#252526" stroke-width="0.85"/><circle cx="2.300" cy="5.500" r=".5" fill="#252526" opacity=".55"/><path d="M1.300 8.500l1.300-.3" stroke="#252526" stroke-width=".7" fill="none"/></svg><span class="t" style="top:904.77px;line-height:36.67px;font-size:21.667px;left:84.20px;color:#cccccc;letter-spacing:-0.050px;">2025_07_15_120608_</span><span class="t" style="top:904.77px;line-height:36.67px;font-size:21.667px;left:300.20px;color:#cccccc;letter-spacing:0.557px;">create_agency_table.php</span><svg style="left:52.90px;top:951.12px" width="20.20" height="14.90" viewBox="0 0 20.2 14.9" ><path d="M5.8 0C2.4 0 0 2.4 0 5.4c0 1.600.5 2.800 1.300 3.600l3.300.4 2.200.8.200 4.700h2.900l.1-3.900h4l.1 3.900h3.600l.2-6.300.7-1 1.600-1-.9-1.600C18.600 2.600 16.400 1 13.400.9h-3C9.400.3 7.800 0 5.800 0z" fill="#9976bf"/><path d="M1.700 8.700l1.700 2.100c.5.700.3 1.400-.3 1.900l.9 1.300" fill="none" stroke="#9976bf" stroke-width="1.500" stroke-linecap="round" stroke-linejoin="round"/><path d="M9.700.3c.3 2 .3 4.200-.3 5.800-.8 1.200-2.500 1.600-4 1" fill="none" stroke="#252526" stroke-width="0.85"/><circle cx="2.300" cy="5.500" r=".5" fill="#252526" opacity=".55"/><path d="M1.300 8.500l1.300-.3" stroke="#252526" stroke-width=".7" fill="none"/></svg><span class="t" style="top:941.43px;line-height:36.67px;font-size:21.667px;left:84.20px;color:#cccccc;letter-spacing:-0.050px;">2025_07_15_122833_</span><span class="t" style="top:941.43px;line-height:36.67px;font-size:21.667px;left:300.20px;color:#cccccc;letter-spacing:0.464px;">create_agency_customer_table.p...</span><svg style="left:52.90px;top:987.78px" width="20.20" height="14.90" viewBox="0 0 20.2 14.9" ><path d="M5.8 0C2.4 0 0 2.4 0 5.4c0 1.600.5 2.800 1.300 3.600l3.300.4 2.200.8.200 4.700h2.900l.1-3.900h4l.1 3.900h3.600l.2-6.300.7-1 1.600-1-.9-1.600C18.600 2.600 16.400 1 13.400.9h-3C9.400.3 7.800 0 5.800 0z" fill="#9976bf"/><path d="M1.700 8.700l1.700 2.100c.5.700.3 1.400-.3 1.900l.9 1.300" fill="none" stroke="#9976bf" stroke-width="1.500" stroke-linecap="round" stroke-linejoin="round"/><path d="M9.700.3c.3 2 .3 4.200-.3 5.800-.8 1.200-2.500 1.600-4 1" fill="none" stroke="#252526" stroke-width="0.85"/><circle cx="2.300" cy="5.500" r=".5" fill="#252526" opacity=".55"/><path d="M1.300 8.500l1.300-.3" stroke="#252526" stroke-width=".7" fill="none"/></svg><span class="t" style="top:978.10px;line-height:36.67px;font-size:21.667px;left:84.20px;color:#cccccc;letter-spacing:-0.050px;">2025_07_17_084357_</span><span class="t" style="top:978.10px;line-height:36.67px;font-size:21.667px;left:300.20px;color:#cccccc;letter-spacing:0.533px;">fix_foreign_key_constraints.php</span><svg style="left:52.90px;top:1024.45px" width="20.20" height="14.90" viewBox="0 0 20.2 14.9" ><path d="M5.8 0C2.4 0 0 2.4 0 5.4c0 1.600.5 2.800 1.300 3.600l3.300.4 2.200.8.200 4.700h2.900l.1-3.900h4l.1 3.900h3.600l.2-6.300.7-1 1.600-1-.9-1.600C18.600 2.600 16.400 1 13.400.9h-3C9.400.3 7.800 0 5.800 0z" fill="#9976bf"/><path d="M1.700 8.700l1.700 2.100c.5.700.3 1.400-.3 1.900l.9 1.300" fill="none" stroke="#9976bf" stroke-width="1.500" stroke-linecap="round" stroke-linejoin="round"/><path d="M9.700.3c.3 2 .3 4.200-.3 5.800-.8 1.200-2.500 1.600-4 1" fill="none" stroke="#37373d" stroke-width="0.85"/><circle cx="2.300" cy="5.500" r=".5" fill="#37373d" opacity=".55"/><path d="M1.300 8.500l1.300-.3" stroke="#37373d" stroke-width=".7" fill="none"/></svg><span class="t" style="top:1014.77px;line-height:36.67px;font-size:21.667px;left:84.20px;color:#cccccc;letter-spacing:-0.050px;">2025_07_17_093943_</span><span class="t" style="top:1014.77px;line-height:36.67px;font-size:21.667px;left:300.20px;color:#cccccc;letter-spacing:0.549px;">add_cus_ins_udp_columns_to_ta...</span><svg style="left:38.17px;top:1055.23px" width="26.67" height="26.67" viewBox="0 0 16 16" ><path d="M7.976 10.072l4.357-4.357.62.618L8.284 11h-.618L3 6.333l.619-.618 4.357 4.357z" fill="#c5c5c5"/></svg><span class="t" style="top:1051.43px;line-height:36.67px;font-size:21.667px;left:70.70px;color:#cccccc;letter-spacing:0.528px;">seeders</span><svg style="left:52.90px;top:1097.78px" width="20.20" height="14.90" viewBox="0 0 20.2 14.9" ><path d="M5.8 0C2.4 0 0 2.4 0 5.4c0 1.600.5 2.800 1.300 3.600l3.300.4 2.200.8.200 4.700h2.900l.1-3.900h4l.1 3.900h3.600l.2-6.300.7-1 1.600-1-.9-1.600C18.600 2.600 16.400 1 13.400.9h-3C9.400.3 7.800 0 5.800 0z" fill="#9976bf"/><path d="M1.700 8.700l1.700 2.100c.5.700.3 1.400-.3 1.900l.9 1.300" fill="none" stroke="#9976bf" stroke-width="1.500" stroke-linecap="round" stroke-linejoin="round"/><path d="M9.700.3c.3 2 .3 4.200-.3 5.800-.8 1.200-2.500 1.600-4 1" fill="none" stroke="#252526" stroke-width="0.85"/><circle cx="2.300" cy="5.500" r=".5" fill="#252526" opacity=".55"/><path d="M1.300 8.500l1.300-.3" stroke="#252526" stroke-width=".7" fill="none"/></svg><span class="t" style="top:1088.10px;line-height:36.67px;font-size:21.667px;left:83.70px;color:#cccccc;letter-spacing:0.489px;">CompanySeeder.php</span><svg style="left:52.90px;top:1134.45px" width="20.20" height="14.90" viewBox="0 0 20.2 14.9" ><path d="M5.8 0C2.4 0 0 2.4 0 5.4c0 1.600.5 2.800 1.300 3.600l3.300.4 2.200.8.200 4.700h2.900l.1-3.900h4l.1 3.900h3.600l.2-6.300.7-1 1.600-1-.9-1.600C18.600 2.600 16.400 1 13.400.9h-3C9.400.3 7.800 0 5.800 0z" fill="#9976bf"/><path d="M1.700 8.700l1.700 2.100c.5.700.3 1.400-.3 1.900l.9 1.300" fill="none" stroke="#9976bf" stroke-width="1.500" stroke-linecap="round" stroke-linejoin="round"/><path d="M9.700.3c.3 2 .3 4.200-.3 5.800-.8 1.200-2.500 1.600-4 1" fill="none" stroke="#252526" stroke-width="0.85"/><circle cx="2.300" cy="5.500" r=".5" fill="#252526" opacity=".55"/><path d="M1.300 8.500l1.300-.3" stroke="#252526" stroke-width=".7" fill="none"/></svg><span class="t" style="top:1124.77px;line-height:36.67px;font-size:21.667px;left:83.70px;color:#cccccc;letter-spacing:0.459px;">DatabaseSeeder.php</span><svg style="left:52.90px;top:1171.12px" width="20.20" height="14.90" viewBox="0 0 20.2 14.9" ><path d="M5.8 0C2.4 0 0 2.4 0 5.4c0 1.600.5 2.800 1.300 3.600l3.300.4 2.200.8.200 4.700h2.900l.1-3.900h4l.1 3.900h3.600l.2-6.300.7-1 1.600-1-.9-1.600C18.600 2.600 16.400 1 13.400.9h-3C9.400.3 7.800 0 5.800 0z" fill="#9976bf"/><path d="M1.700 8.700l1.700 2.100c.5.700.3 1.400-.3 1.900l.9 1.300" fill="none" stroke="#9976bf" stroke-width="1.500" stroke-linecap="round" stroke-linejoin="round"/><path d="M9.700.3c.3 2 .3 4.200-.3 5.800-.8 1.200-2.500 1.600-4 1" fill="none" stroke="#252526" stroke-width="0.85"/><circle cx="2.300" cy="5.500" r=".5" fill="#252526" opacity=".55"/><path d="M1.300 8.500l1.300-.3" stroke="#252526" stroke-width=".7" fill="none"/></svg><span class="t" style="top:1161.43px;line-height:36.67px;font-size:21.667px;left:83.70px;color:#cccccc;letter-spacing:0.538px;">QuestionSeeder.php</span><svg style="left:38.50px;top:1204.73px" width="21.00" height="21.00" viewBox="0 0 16 16" ><rect x="3.2" y="3.2" width="9.6" height="9.6" rx="1.2" transform="rotate(45 8 8)" fill="#41535b"/><path d="M6.2 4.600l3.600 3.600M8 6.400v5" stroke="#252526" stroke-width="1" fill="none"/></svg><span class="t" style="top:1198.10px;line-height:36.67px;font-size:21.667px;left:70.70px;color:#cccccc;letter-spacing:0.730px;">.gitignore</span><svg style="left:44.80px;top:1242.90px" width="18.00" height="18.00" viewBox="0 0 16 16" ><path d="M1.200 2.600h12.400M1.200 6.200h8.400M1.200 9.800h12.400M1.200 13.400h8.400" stroke="#d4d7d6" stroke-width="1.700" fill="none"/></svg><span class="t" style="top:1234.77px;line-height:36.67px;font-size:21.667px;left:70.70px;color:#cccccc;letter-spacing:0.589px;">database.sqlite</span><svg style="left:23.87px;top:1275.23px" width="26.67" height="26.67" viewBox="0 0 16 16" ><path d="M10.072 8.024L5.715 3.667l.618-.62L11 7.716v.618L6.333 13l-.618-.619 4.357-4.357z" fill="#c5c5c5"/></svg><span class="t" style="top:1271.43px;line-height:36.67px;font-size:21.667px;left:56.70px;color:#cccccc;letter-spacing:0.659px;">node_modules</span><svg style="left:23.87px;top:1311.90px" width="26.67" height="26.67" viewBox="0 0 16 16" ><path d="M10.072 8.024L5.715 3.667l.618-.62L11 7.716v.618L6.333 13l-.618-.619 4.357-4.357z" fill="#c5c5c5"/></svg><span class="t" style="top:1308.10px;line-height:36.67px;font-size:21.667px;left:56.70px;color:#cccccc;letter-spacing:1.098px;">public</span><svg style="left:24.67px;top:1348.57px" width="26.67" height="26.67" viewBox="0 0 16 16" ><path d="M7.976 10.072l4.357-4.357.62.618L8.284 11h-.618L3 6.333l.619-.618 4.357 4.357z" fill="#c5c5c5"/></svg><span class="t" style="top:1344.77px;line-height:36.67px;font-size:21.667px;left:56.70px;color:#cccccc;letter-spacing:0.659px;">resources</span><svg style="left:38.17px;top:1385.23px" width="26.67" height="26.67" viewBox="0 0 16 16" ><path d="M7.976 10.072l4.357-4.357.62.618L8.284 11h-.618L3 6.333l.619-.618 4.357 4.357z" fill="#c5c5c5"/></svg><span class="t" style="top:1381.43px;line-height:36.67px;font-size:21.667px;left:70.70px;color:#cccccc;letter-spacing:0.475px;">css</span><span class="t" style="top:1417.30px;line-height:36.67px;font-size:23.000px;left:55.00px;color:#6398b7;font-weight:700;transform:scaleX(1.18);transform-origin:0 50%;-webkit-text-stroke:0;">#</span><span class="t" style="top:1418.10px;line-height:36.67px;font-size:21.667px;left:83.70px;color:#cccccc;letter-spacing:0.580px;">app.css</span><span class="t" style="top:1453.97px;line-height:36.67px;font-size:23.000px;left:55.00px;color:#6398b7;font-weight:700;transform:scaleX(1.18);transform-origin:0 50%;-webkit-text-stroke:0;">#</span><span class="t" style="top:1454.77px;line-height:36.67px;font-size:21.667px;left:83.70px;color:#cccccc;letter-spacing:0.804px;">bootstrap.css</span><span class="t" style="top:1490.63px;line-height:36.67px;font-size:23.000px;left:55.00px;color:#6398b7;font-weight:700;transform:scaleX(1.18);transform-origin:0 50%;-webkit-text-stroke:0;">#</span><span class="t" style="top:1491.43px;line-height:36.67px;font-size:21.667px;left:83.70px;color:#cccccc;letter-spacing:0.693px;">tailwind.css</span><svg style="left:38.17px;top:1531.90px" width="26.67" height="26.67" viewBox="0 0 16 16" ><path d="M7.976 10.072l4.357-4.357.62.618L8.284 11h-.618L3 6.333l.619-.618 4.357 4.357z" fill="#c5c5c5"/></svg><span class="t" style="top:1528.10px;line-height:36.67px;font-size:21.667px;left:70.70px;color:#cccccc;letter-spacing:-0.447px;">js</span><span class="t" style="top:1564.37px;line-height:36.67px;font-size:17.200px;left:55.00px;color:#cbcb5a;font-weight:700;transform:scaleX(.8);transform-origin:0 50%;-webkit-text-stroke:0;">JS</span><span class="t" style="top:1564.77px;line-height:36.67px;font-size:21.667px;left:83.70px;color:#cccccc;letter-spacing:0.537px;">app.js</span><span class="t" style="top:1601.03px;line-height:36.67px;font-size:17.200px;left:55.00px;color:#cbcb5a;font-weight:700;transform:scaleX(.8);transform-origin:0 50%;-webkit-text-stroke:0;">JS</span><span class="t" style="top:1601.43px;line-height:36.67px;font-size:21.667px;left:83.70px;color:#cccccc;letter-spacing:0.836px;">bootstrap.js</span><svg style="left:38.17px;top:1641.90px" width="26.67" height="26.67" viewBox="0 0 16 16" ><path d="M7.976 10.072l4.357-4.357.62.618L8.284 11h-.618L3 6.333l.619-.618 4.357 4.357z" fill="#c5c5c5"/></svg><span class="t" style="top:1638.10px;line-height:36.67px;font-size:21.667px;left:70.70px;color:#cccccc;letter-spacing:0.518px;">views</span><svg style="left:51.67px;top:1678.57px" width="26.67" height="26.67" viewBox="0 0 16 16" ><path d="M7.976 10.072l4.357-4.357.62.618L8.284 11h-.618L3 6.333l.619-.618 4.357 4.357z" fill="#c5c5c5"/></svg><span class="t" style="top:1674.77px;line-height:36.67px;font-size:21.667px;left:83.20px;color:#cccccc;letter-spacing:0.809px;">admin</span><svg style="left:66.40px;top:1721.12px" width="20.20" height="14.90" viewBox="0 0 20.2 14.9" ><path d="M5.8 0C2.4 0 0 2.4 0 5.4c0 1.600.5 2.800 1.300 3.600l3.300.4 2.200.8.200 4.700h2.900l.1-3.900h4l.1 3.900h3.600l.2-6.300.7-1 1.600-1-.9-1.600C18.600 2.600 16.400 1 13.400.9h-3C9.400.3 7.800 0 5.800 0z" fill="#9976bf"/><path d="M1.700 8.700l1.700 2.100c.5.700.3 1.400-.3 1.900l.9 1.300" fill="none" stroke="#9976bf" stroke-width="1.500" stroke-linecap="round" stroke-linejoin="round"/><path d="M9.700.3c.3 2 .3 4.200-.3 5.800-.8 1.200-2.500 1.600-4 1" fill="none" stroke="#252526" stroke-width="0.85"/><circle cx="2.300" cy="5.500" r=".5" fill="#252526" opacity=".55"/><path d="M1.300 8.500l1.300-.3" stroke="#252526" stroke-width=".7" fill="none"/></svg><span class="t" style="top:1711.43px;line-height:36.67px;font-size:21.667px;left:97.00px;color:#cccccc;letter-spacing:0.655px;">dashboard.blade.php</span><div class="a" style="left:47.00px;top:298.00px;width:1.30px;height:752.23px;background:#585858;"></div><div class="a" style="left:0.00px;top:130.00px;width:660.00px;height:168.00px;background:#252526;box-shadow:0 3px 5px rgba(0,0,0,.45);"></div><div class="a" style="left:208.00px;top:138.00px;width:44.00px;height:43.00px;background:#323237;border-radius:8px;"></div><svg style="left:217.30px;top:146.20px" width="28.40" height="28.60" viewBox="0 0 27 28" ><path d="M8.200 2.200h9.300l3.600 3.800v11.800a1.200 1.200 0 0 1-1.200 1.200H8.200a1.200 1.200 0 0 1-1.200-1.200V3.400a1.200 1.200 0 0 1 1.200-1.200z" fill="#323237" stroke="#dcdcdc" stroke-width="1.700"/><path d="M17.300 2.400v3.800h3.600" fill="none" stroke="#dcdcdc" stroke-width="1.500"/><path d="M6.800 8.200H4.200a1.200 1.200 0 0 0-1.200 1.200v14.200a1.200 1.200 0 0 0 1.200 1.200h9.600a1.200 1.200 0 0 0 1.200-1.200v-4.300" fill="none" stroke="#dcdcdc" stroke-width="1.700"/></svg><svg style="left:268.00px;top:142.00px" width="32.00" height="34.00" viewBox="0 0 32 34" ><circle cx="18.500" cy="13.600" r="7.700" fill="none" stroke="#a3a3a3" stroke-width="1.700"/><path d="M13.300 19.500L4.300 29.300" stroke="#a3a3a3" stroke-width="1.800" fill="none"/></svg><svg style="left:322.00px;top:142.00px" width="30.00" height="34.00" viewBox="0 0 30 34" ><circle cx="9.200" cy="9" r="3.400" fill="none" stroke="#a3a3a3" stroke-width="1.700"/><circle cx="9.200" cy="26.200" r="3.400" fill="none" stroke="#a3a3a3" stroke-width="1.700"/><circle cx="20.400" cy="13.600" r="3.400" fill="none" stroke="#a3a3a3" stroke-width="1.700"/><path d="M9.200 12.400v10.400M9.200 20.500c0-2.300 1.800-2.300 5.400-2.600 2.500-.2 4.300-.8 5.100-1.500" fill="none" stroke="#a3a3a3" stroke-width="1.700"/></svg><svg style="left:374.00px;top:142.00px" width="32.00" height="34.00" viewBox="0 0 32 34" ><path d="M4.800 11.300h9.200v18.200H5.800a1 1 0 0 1-1-1zM14 20.400h9.300v8.100a1 1 0 0 1-1 1H14M4.800 20.400H14" fill="none" stroke="#a3a3a3" stroke-width="1.800" stroke-linejoin="round"/><rect x="18.900" y="6.200" width="8.700" height="8.400" rx="1" fill="none" stroke="#a3a3a3" stroke-width="1.800"/></svg><svg style="left:429.97px;top:146.17px" width="26.67" height="26.67" viewBox="0 0 16 16" ><path d="M7.976 10.072l4.357-4.357.62.618L8.284 11h-.618L3 6.333l.619-.618 4.357 4.357z" fill="#a3a3a3"/></svg><svg style="left:3.47px;top:192.97px" width="26.67" height="26.67" viewBox="0 0 16 16" ><path d="M7.976 10.072l4.357-4.357.62.618L8.284 11h-.618L3 6.333l.619-.618 4.357 4.357z" fill="#c5c5c5"/></svg><span class="t" style="top:189.17px;line-height:36.67px;font-size:18.333px;left:33.80px;color:#cccccc;font-weight:700;letter-spacing:0.688px;">SAS-LOG</span><svg style="left:24.67px;top:229.67px" width="26.67" height="26.67" viewBox="0 0 16 16" ><path d="M7.976 10.072l4.357-4.357.62.618L8.284 11h-.618L3 6.333l.619-.618 4.357 4.357z" fill="#c5c5c5"/></svg><span class="t" style="top:225.87px;line-height:36.67px;font-size:21.667px;left:56.80px;color:#cccccc;letter-spacing:0.664px;">database</span><svg style="left:38.17px;top:266.37px" width="26.67" height="26.67" viewBox="0 0 16 16" ><path d="M7.976 10.072l4.357-4.357.62.618L8.284 11h-.618L3 6.333l.619-.618 4.357 4.357z" fill="#c5c5c5"/></svg><span class="t" style="top:262.57px;line-height:36.67px;font-size:21.667px;left:70.00px;color:#cccccc;letter-spacing:0.795px;">migrations</span><div class="a" style="left:0.00px;top:1756.00px;width:660.00px;height:120.00px;background:#252526;"></div><div class="a" style="left:0.00px;top:1766.00px;width:660.00px;height:1.40px;background:#3f3f40;"></div><div class="a" style="left:0.00px;top:1802.60px;width:660.00px;height:1.40px;background:#3f3f40;"></div><div class="a" style="left:0.00px;top:1839.30px;width:660.00px;height:1.40px;background:#3f3f40;"></div><svg style="left:3.97px;top:1771.27px" width="26.67" height="26.67" viewBox="0 0 16 16" ><path d="M10.072 8.024L5.715 3.667l.618-.62L11 7.716v.618L6.333 13l-.618-.619 4.357-4.357z" fill="#c5c5c5"/></svg><svg style="left:3.97px;top:1807.87px" width="26.67" height="26.67" viewBox="0 0 16 16" ><path d="M10.072 8.024L5.715 3.667l.618-.62L11 7.716v.618L6.333 13l-.618-.619 4.357-4.357z" fill="#c5c5c5"/></svg><svg style="left:3.97px;top:1844.47px" width="26.67" height="26.67" viewBox="0 0 16 16" ><path d="M10.072 8.024L5.715 3.667l.618-.62L11 7.716v.618L6.333 13l-.618-.619 4.357-4.357z" fill="#c5c5c5"/></svg><span class="t" style="top:1840.67px;line-height:36.67px;font-size:18.333px;left:34.40px;color:#cccccc;font-weight:700;letter-spacing:0.150px;">TIMELINE</span><div class="a" style="left:27.00px;top:1757.00px;width:299.50px;height:87.50px;background:#222223;border:1.3px solid #343435;border-radius:11px;box-shadow:0 4px 14px rgba(0,0,0,.5);"></div><svg style="left:40.00px;top:1771.00px" width="17.00" height="18.00" viewBox="0 0 17 18" ><path d="M2 6.500h13v10.300H2zM8.500 6.500v10.300M1.200 6.500h14.600M8.500 6.200C6 6 4.300 4.800 4.800 3c.6-2 3.200-1 3.700 3.200.5-4.200 3.100-5.200 3.700-3.200.5 1.800-1.200 3-3.700 3.200z" fill="none" stroke="#bdbdbd" stroke-width="1.400"/></svg><span class="t" style="top:1763.47px;line-height:36.67px;font-size:18.000px;left:68.20px;color:#8c8c8c;font-weight:700;letter-spacing:-0.309px;">New update available</span><svg style="left:288.00px;top:1770.00px" width="22.00" height="22.00" viewBox="0 0 16 16" ><path d="M8 8.707l3.646 3.647.708-.707L8.707 8l3.647-3.646-.707-.708L8 7.293 4.354 3.646l-.707.708L7.293 8l-3.646 3.646.707.708L8 8.707z" fill="#c5c5c5"/></svg><div class="a" style="left:41.00px;top:1804.00px;width:271.00px;height:26.80px;background:#2c598a;border-radius:7px;"></div><span class="t" style="top:1800.47px;line-height:36.67px;font-size:20.500px;left:125.20px;color:#ffffff;letter-spacing:-0.490px;-webkit-text-stroke:.2px #fff;">Update now</span><div class="a" style="left:0.00px;top:1876.00px;width:2940.00px;height:36.00px;background:#3478c6;"></div><div class="a" style="left:0.00px;top:1876.00px;width:57.00px;height:36.00px;background:#3d8060;"></div><svg style="left:19.00px;top:1881.00px" width="20.00" height="24.00" viewBox="0 0 20 24" ><path d="M2.200 9.800l8.800 5.600-8.800 5.600M17.200 1.800l-8.600 5.600 8.600 5.600" fill="none" stroke="#ffffff" stroke-width="1.700"/></svg><svg style="left:71.00px;top:1883.00px" width="21.00" height="21.00" viewBox="0 0 21 21" ><circle cx="10.500" cy="10.500" r="9.300" fill="none" stroke="#ffffff" stroke-width="1.600"/><path d="M6.800 6.800l7.400 7.400M14.200 6.800l-7.400 7.400" stroke="#ffffff" stroke-width="1.600"/></svg><span class="t" style="top:1876.70px;line-height:36.00px;font-size:21.300px;left:99.50px;color:#ffffff;">0</span><svg style="left:118.50px;top:1882.50px" width="21.00" height="21.00" viewBox="0 0 21 21" ><path d="M10.500 1.800l9.300 17.400H1.200z" fill="none" stroke="#ffffff" stroke-width="1.600" stroke-linejoin="round"/><path d="M10.500 8v6.200M10.500 15.600v1.900" stroke="#ffffff" stroke-width="1.700"/></svg><span class="t" style="top:1876.70px;line-height:36.00px;font-size:21.300px;left:146.50px;color:#ffffff;">0</span><svg style="left:187.50px;top:1882.50px" width="21.00" height="22.00" viewBox="0 0 21 22" ><path d="M10.500 8.500L6.200 20.800M10.500 8.500l4.300 12.300M7.600 16.800h5.800" fill="none" stroke="#ffffff" stroke-width="1.600"/><circle cx="10.500" cy="7" r="1.700" fill="none" stroke="#ffffff" stroke-width="1.300"/><path d="M6.600 3.200a5.500 5.500 0 0 0 0 7.800M14.400 3.200a5.500 5.500 0 0 1 0 7.800M3.800 .8a9.200 9.200 0 0 0 0 12.600M17.200 .8a9.200 9.200 0 0 1 0 12.600" fill="none" stroke="#ffffff" stroke-width="1.500"/></svg><span class="t" style="top:1876.70px;line-height:36.00px;font-size:21.300px;left:215.20px;color:#ffffff;">0</span><div class="a" style="left:2566.00px;top:1876.00px;width:57.00px;height:36.00px;background:#1b3a61;"></div><svg style="left:2582.00px;top:1882.00px" width="24.00" height="24.00" viewBox="0 0 24 24" ><circle cx="10" cy="9.800" r="7.600" fill="none" stroke="#ffffff" stroke-width="1.700"/><path d="M15.600 15.400l6.800 7M6.300 9.800h7.400" stroke="#ffffff" stroke-width="1.700" fill="none"/></svg><svg style="left:2638.00px;top:1882.00px" width="20.00" height="24.00" viewBox="0 0 20 24" ><circle cx="10" cy="10" r="2.600" fill="#ffffff"/><path d="M10 12v10" stroke="#ffffff" stroke-width="2.600"/><path d="M5.800 14.600a6 6 0 1 1 8.400 0M3.600 17.800a9.200 9.200 0 1 1 12.800 0" fill="none" stroke="#ffffff" stroke-width="1.600"/></svg><span class="t" style="top:1876.70px;line-height:36.00px;font-size:21.300px;left:2665.80px;color:#ffffff;letter-spacing:-0.409px;">Go Live</span><span class="t" style="top:1876.70px;line-height:36.00px;font-size:21.300px;left:2762.60px;color:#ffffff;letter-spacing:-0.043px;">Cursor Tab</span><svg style="left:2892.00px;top:1882.00px" width="24.00" height="24.00" viewBox="0 0 24 24" ><path d="M4.500 18.200c1.600-1.500 2-3 2-6.200 0-3.800 1.800-6.800 5-6.800 1 0 1.900.3 2.600.8M16.500 10.500c.1 4 .5 5.800 2.200 7.700zM3.600 18.400h15.800M9.500 19.500a2.300 2.300 0 0 0 4.400 0" fill="none" stroke="#ffffff" stroke-width="1.600"/><circle cx="17.800" cy="5" r="4.200" fill="#ffffff"/></svg></div></body></html>
